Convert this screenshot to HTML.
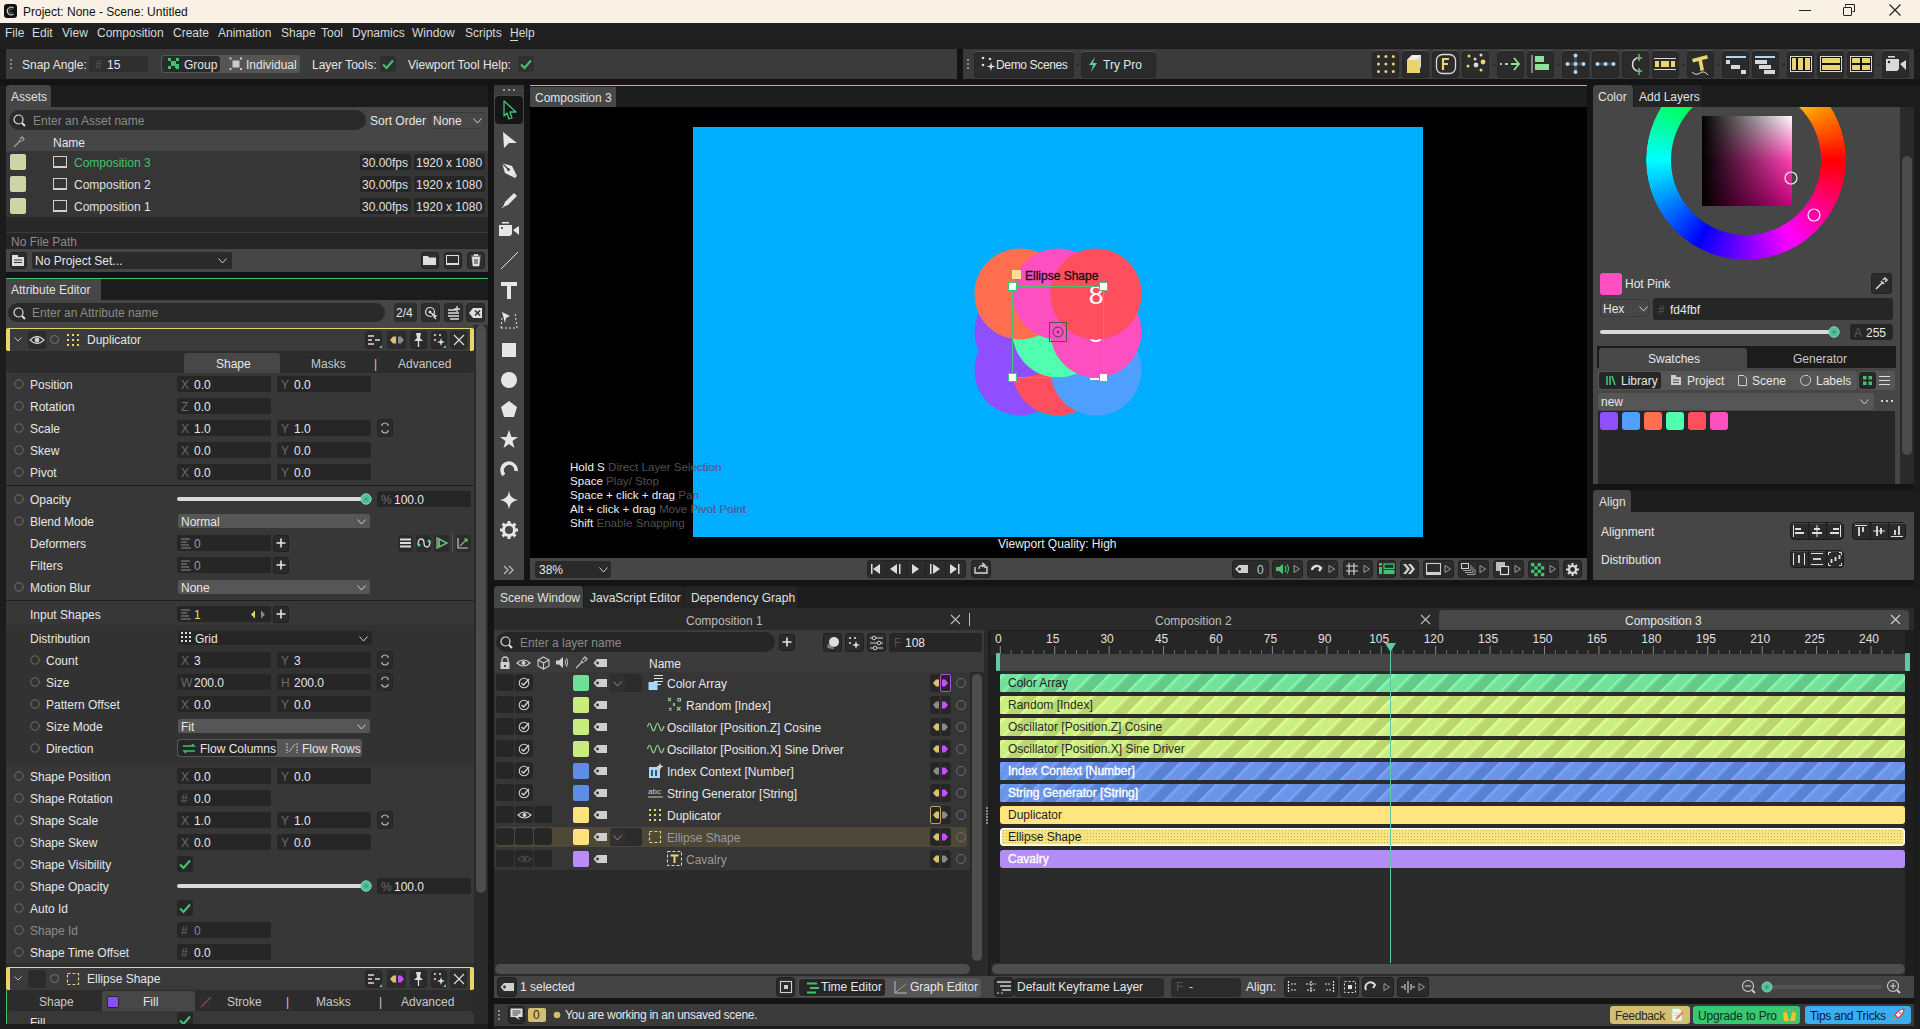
<!DOCTYPE html><html><head><meta charset="utf-8"><style>
*{margin:0;padding:0;box-sizing:border-box}
html,body{width:1920px;height:1029px;overflow:hidden;background:#1c1c1c;font-family:"Liberation Sans",sans-serif}
.a{position:absolute}
.t{position:absolute;white-space:nowrap}
svg{position:absolute;overflow:visible}
</style></head><body><div class="a" style="left:0px;top:0px;width:1920px;height:23px;background:#f9f1e4;"></div><div class="a" style="left:4px;top:4px;width:13px;height:14px;background:#111;border-radius:3px;"></div><svg style="left:5px;top:5px" width="11" height="12"><path d="M8.5 3A3.8 3.8 0 1 0 8.5 9" fill="none" stroke="#ddd" stroke-width="1.1"/><path d="M7.5 4.5A2 2 0 1 0 7.5 7.5" fill="none" stroke="#888" stroke-width="0.8"/></svg><div class="t" style="left:23px;top:4px;font-size:12px;line-height:17px;color:#111;">Project: None - Scene: Untitled</div><div class="a" style="left:1799px;top:10px;width:12px;height:1px;background:#222;"></div><div class="a" style="left:1843px;top:7px;width:9px;height:9px;border:1px solid #222;border-radius:1px"></div><svg style="left:1845px;top:4px" width="10" height="10"><path d="M0.5 2.5V0.5H9.5V7.5H7.5" fill="none" stroke="#222" stroke-width="1"/></svg><svg style="left:1889px;top:4px" width="12" height="12"><path d="M0.5 0.5L11.5 11.5M11.5 0.5L0.5 11.5" stroke="#222" stroke-width="1.2"/></svg><div class="a" style="left:0px;top:23px;width:1920px;height:26px;background:#202020;"></div><div class="a" style="left:0px;top:41px;width:1920px;height:8px;background:#1e1e1e;"></div><div class="t" style="left:5px;top:25px;font-size:12px;line-height:17px;color:#d8d8d8;">File</div><div class="t" style="left:32px;top:25px;font-size:12px;line-height:17px;color:#d8d8d8;">Edit</div><div class="t" style="left:62px;top:25px;font-size:12px;line-height:17px;color:#d8d8d8;">View</div><div class="t" style="left:97px;top:25px;font-size:12px;line-height:17px;color:#d8d8d8;">Composition</div><div class="t" style="left:173px;top:25px;font-size:12px;line-height:17px;color:#d8d8d8;">Create</div><div class="t" style="left:218px;top:25px;font-size:12px;line-height:17px;color:#d8d8d8;">Animation</div><div class="t" style="left:281px;top:25px;font-size:12px;line-height:17px;color:#d8d8d8;">Shape</div><div class="t" style="left:321px;top:25px;font-size:12px;line-height:17px;color:#d8d8d8;">Tool</div><div class="t" style="left:352px;top:25px;font-size:12px;line-height:17px;color:#d8d8d8;">Dynamics</div><div class="t" style="left:412px;top:25px;font-size:12px;line-height:17px;color:#d8d8d8;">Window</div><div class="t" style="left:465px;top:25px;font-size:12px;line-height:17px;color:#d8d8d8;">Scripts</div><div class="t" style="left:510px;top:25px;font-size:12px;line-height:17px;color:#d8d8d8;">Help</div><div class="a" style="left:510px;top:40px;width:8px;height:1px;background:#d8d8d8;"></div><div class="a" style="left:0px;top:79px;width:1920px;height:6px;background:#141414;"></div><div class="a" style="left:6px;top:49px;width:951px;height:30px;background:#3b3b3b;"></div><div class="a" style="left:963px;top:49px;width:951px;height:30px;background:#3b3b3b;"></div><div class="a" style="left:957px;top:49px;width:6px;height:30px;background:#141414;"></div><div class="a" style="left:6px;top:85px;width:45px;height:22px;background:#464646;border-radius:4px 4px 0 0;"></div><div class="t" style="left:11px;top:89px;font-size:12px;line-height:17px;color:#e0e0e0;">Assets</div><div class="a" style="left:6px;top:107px;width:482px;height:125px;background:#464646;"></div><div class="a" style="left:9px;top:110px;width:357px;height:20px;background:#2a2a2a;border-radius:10px;"></div><div class="a" style="left:6px;top:151px;width:482px;height:66px;background:#363636;"></div><div class="a" style="left:6px;top:217px;width:482px;height:15px;background:#282828;"></div><div class="a" style="left:6px;top:232px;width:482px;height:40px;background:#464646;"></div><div class="a" style="left:6px;top:272px;width:482px;height:6px;background:#141414;"></div><div class="a" style="left:6px;top:278px;width:482px;height:1px;background:#3ec46d;"></div><div class="a" style="left:6px;top:279px;width:95px;height:21px;background:#464646;"></div><div class="t" style="left:11px;top:282px;font-size:12px;line-height:17px;color:#e0e0e0;">Attribute Editor</div><div class="a" style="left:6px;top:300px;width:482px;height:704px;background:#464646;"></div><div class="a" style="left:494px;top:85px;width:30px;height:495px;background:#464646;"></div><div class="a" style="left:494px;top:85px;width:30px;height:10px;background:#3d3d3d;"></div><div class="a" style="left:530px;top:85px;width:1057px;height:495px;background:#1c1c1c;"></div><div class="a" style="left:530px;top:85px;width:1057px;height:1px;background:#c9b56a;"></div><div class="a" style="left:530px;top:87px;width:86px;height:20px;background:#474747;"></div><div class="t" style="left:535px;top:90px;font-size:12px;line-height:17px;color:#e0e0e0;">Composition 3</div><div class="a" style="left:530px;top:107px;width:1057px;height:451px;background:#000;"></div><div class="a" style="left:693px;top:127px;width:730px;height:410px;background:#00adff;"></div><div class="a" style="left:530px;top:558px;width:1057px;height:22px;background:#464646;"></div><div class="a" style="left:1593px;top:85px;width:40px;height:22px;background:#464646;border-radius:4px 4px 0 0;"></div><div class="t" style="left:1598px;top:89px;font-size:12px;line-height:17px;color:#e0e0e0;">Color</div><div class="a" style="left:1634px;top:85px;width:68px;height:22px;background:#252525;border-radius:4px 4px 0 0;"></div><div class="t" style="left:1639px;top:89px;font-size:12px;line-height:17px;color:#e0e0e0;">Add Layers</div><div class="a" style="left:1593px;top:107px;width:307px;height:377px;background:#464646;"></div><div class="a" style="left:1900px;top:107px;width:14px;height:378px;background:#2a2a2a;"></div><div class="a" style="left:1593px;top:490px;width:38px;height:22px;background:#464646;border-radius:4px 4px 0 0;"></div><div class="t" style="left:1599px;top:494px;font-size:12px;line-height:17px;color:#e0e0e0;">Align</div><div class="a" style="left:1593px;top:512px;width:321px;height:68px;background:#464646;"></div><div class="a" style="left:494px;top:586px;width:89px;height:22px;background:#464646;border-radius:4px 4px 0 0;"></div><div class="t" style="left:500px;top:590px;font-size:12px;line-height:17px;color:#e0e0e0;">Scene Window</div><div class="a" style="left:584px;top:586px;width:100px;height:22px;background:#252525;border-radius:4px 4px 0 0;"></div><div class="a" style="left:685px;top:586px;width:112px;height:22px;background:#252525;border-radius:4px 4px 0 0;"></div><div class="t" style="left:590px;top:590px;font-size:12px;line-height:17px;color:#e0e0e0;">JavaScript Editor</div><div class="t" style="left:691px;top:590px;font-size:12px;line-height:17px;color:#e0e0e0;">Dependency Graph</div><div class="a" style="left:494px;top:608px;width:1420px;height:390px;background:#2a2a2a;"></div><div class="a" style="left:494px;top:976px;width:1420px;height:22px;background:#464646;"></div><div class="a" style="left:494px;top:1004px;width:1420px;height:22px;background:#3a3a3a;"></div><div class="a" style="left:10px;top:59px;width:2px;height:2px;background:#8a8a8a;"></div><div class="a" style="left:10px;top:63px;width:2px;height:2px;background:#8a8a8a;"></div><div class="a" style="left:10px;top:67px;width:2px;height:2px;background:#8a8a8a;"></div><div class="t" style="left:22px;top:57px;font-size:12px;line-height:17px;color:#e6e6e6;">Snap Angle:</div><div class="a" style="left:89px;top:56px;width:59px;height:16px;background:#2f2f2f;border-radius:2px;"></div><div class="t" style="left:95px;top:57px;font-size:12px;line-height:17px;color:#5a5a5a;">#</div><div class="t" style="left:107px;top:57px;font-size:12px;line-height:17px;color:#e6e6e6;">15</div><div class="a" style="left:161px;top:55px;width:139px;height:18px;background:#555555;border-radius:3px;"></div><div class="a" style="left:162px;top:56px;width:58px;height:16px;background:#2a2a2a;border-radius:3px;"></div><svg style="left:167px;top:57px" width="14" height="14"><rect x="1" y="1" width="3" height="3" fill="#3ec46d"/><rect x="9" y="1" width="3" height="3" fill="#3ec46d"/><rect x="1" y="9" width="3" height="3" fill="#3ec46d"/><rect x="9" y="9" width="3" height="3" fill="#3ec46d"/><rect x="4" y="4" width="5" height="5" fill="#3ec46d"/><rect x="8" y="7" width="4" height="4" fill="#3ec46d"/></svg><div class="t" style="left:184px;top:57px;font-size:12px;line-height:17px;color:#e6e6e6;">Group</div><svg style="left:229px;top:57px" width="14" height="14"><rect x="0.5" y="0.5" width="2" height="2" fill="#ccc"/><rect x="11" y="0.5" width="2" height="2" fill="#ccc"/><rect x="0.5" y="11" width="2" height="2" fill="#ccc"/><rect x="11" y="11" width="2" height="2" fill="#ccc"/><rect x="3.5" y="3.5" width="7" height="7" fill="#ccc"/></svg><div class="t" style="left:246px;top:57px;font-size:12px;line-height:17px;color:#e6e6e6;">Individual</div><div class="t" style="left:312px;top:57px;font-size:12px;line-height:17px;color:#e6e6e6;">Layer Tools:</div><div class="a" style="left:380px;top:56px;width:16px;height:16px;background:#2f2f2f;border-radius:3px;"></div><svg style="left:382px;top:59px" width="12" height="10"><path d="M1 5.5L4.5 9L11 1.5" fill="none" stroke="#3ec46d" stroke-width="2.2"/></svg><div class="t" style="left:408px;top:57px;font-size:12px;line-height:17px;color:#e6e6e6;">Viewport Tool Help:</div><div class="a" style="left:518px;top:56px;width:16px;height:16px;background:#2f2f2f;border-radius:3px;"></div><svg style="left:520px;top:59px" width="12" height="10"><path d="M1 5.5L4.5 9L11 1.5" fill="none" stroke="#3ec46d" stroke-width="2.2"/></svg><div class="a" style="left:967px;top:59px;width:2px;height:2px;background:#8a8a8a;"></div><div class="a" style="left:967px;top:63px;width:2px;height:2px;background:#8a8a8a;"></div><div class="a" style="left:967px;top:67px;width:2px;height:2px;background:#8a8a8a;"></div><div class="a" style="left:974px;top:51px;width:100px;height:27px;background:#2b2b2b;border-radius:4px;border-top:1px solid #555;box-shadow:inset 0 0 0 1px #262626;"></div><svg style="left:980px;top:55px" width="16" height="18"><circle cx="3" cy="3" r="1.3" fill="#ddd"/><circle cx="10" cy="4" r="1.3" fill="#ddd"/><circle cx="3" cy="10" r="1.3" fill="#ddd"/><path d="M11 7L12 10.5L15.5 11.5L12 12.5L11 16L10 12.5L6.5 11.5L10 10.5Z" fill="#ddd"/></svg><div class="t" style="left:996px;top:57px;font-size:12px;line-height:17px;color:#e6e6e6;letter-spacing:-0.35px;">Demo Scenes</div><div class="a" style="left:1081px;top:51px;width:75px;height:27px;background:#2b2b2b;border-radius:4px;border-top:1px solid #555;box-shadow:inset 0 0 0 1px #262626;"></div><svg style="left:1088px;top:57px" width="10" height="15"><path d="M7 0L1 8H5L3 15L9 6H5Z" fill="#5ec9a6"/></svg><div class="t" style="left:1103px;top:57px;font-size:12px;line-height:17px;color:#e6e6e6;">Try Pro</div><div class="a" style="left:1076px;top:63px;width:3px;height:3px;background:#2a2a2a;border-radius:50%;"></div><div class="a" style="left:1493px;top:63px;width:3px;height:3px;background:#2a2a2a;border-radius:50%;"></div><div class="a" style="left:1557px;top:63px;width:3px;height:3px;background:#2a2a2a;border-radius:50%;"></div><div class="a" style="left:1682px;top:63px;width:3px;height:3px;background:#2a2a2a;border-radius:50%;"></div><div class="a" style="left:1717px;top:63px;width:3px;height:3px;background:#2a2a2a;border-radius:50%;"></div><div class="a" style="left:1782px;top:63px;width:3px;height:3px;background:#2a2a2a;border-radius:50%;"></div><div class="a" style="left:1877px;top:63px;width:3px;height:3px;background:#2a2a2a;border-radius:50%;"></div><div class="a" style="left:1372px;top:50px;width:27px;height:28px;background:#2b2b2b;border-radius:4px;border-top:1px solid #555;box-shadow:inset 0 0 0 1px #262626;"></div><div class="a" style="left:1402px;top:50px;width:27px;height:28px;background:#2b2b2b;border-radius:4px;border-top:1px solid #555;box-shadow:inset 0 0 0 1px #262626;"></div><div class="a" style="left:1432px;top:50px;width:27px;height:28px;background:#2b2b2b;border-radius:4px;border-top:1px solid #555;box-shadow:inset 0 0 0 1px #262626;"></div><div class="a" style="left:1462px;top:50px;width:27px;height:28px;background:#2b2b2b;border-radius:4px;border-top:1px solid #555;box-shadow:inset 0 0 0 1px #262626;"></div><div class="a" style="left:1497px;top:50px;width:27px;height:28px;background:#2b2b2b;border-radius:4px;border-top:1px solid #555;box-shadow:inset 0 0 0 1px #262626;"></div><div class="a" style="left:1527px;top:50px;width:27px;height:28px;background:#2b2b2b;border-radius:4px;border-top:1px solid #555;box-shadow:inset 0 0 0 1px #262626;"></div><div class="a" style="left:1562px;top:50px;width:27px;height:28px;background:#2b2b2b;border-radius:4px;border-top:1px solid #555;box-shadow:inset 0 0 0 1px #262626;"></div><div class="a" style="left:1592px;top:50px;width:27px;height:28px;background:#2b2b2b;border-radius:4px;border-top:1px solid #555;box-shadow:inset 0 0 0 1px #262626;"></div><div class="a" style="left:1622px;top:50px;width:27px;height:28px;background:#2b2b2b;border-radius:4px;border-top:1px solid #555;box-shadow:inset 0 0 0 1px #262626;"></div><div class="a" style="left:1652px;top:50px;width:27px;height:28px;background:#2b2b2b;border-radius:4px;border-top:1px solid #555;box-shadow:inset 0 0 0 1px #262626;"></div><div class="a" style="left:1687px;top:50px;width:27px;height:28px;background:#2b2b2b;border-radius:4px;border-top:1px solid #555;box-shadow:inset 0 0 0 1px #262626;"></div><div class="a" style="left:1722px;top:50px;width:27px;height:28px;background:#2b2b2b;border-radius:4px;border-top:1px solid #555;box-shadow:inset 0 0 0 1px #262626;"></div><div class="a" style="left:1752px;top:50px;width:27px;height:28px;background:#2b2b2b;border-radius:4px;border-top:1px solid #555;box-shadow:inset 0 0 0 1px #262626;"></div><div class="a" style="left:1787px;top:50px;width:27px;height:28px;background:#2b2b2b;border-radius:4px;border-top:1px solid #555;box-shadow:inset 0 0 0 1px #262626;"></div><div class="a" style="left:1817px;top:50px;width:27px;height:28px;background:#2b2b2b;border-radius:4px;border-top:1px solid #555;box-shadow:inset 0 0 0 1px #262626;"></div><div class="a" style="left:1847px;top:50px;width:27px;height:28px;background:#2b2b2b;border-radius:4px;border-top:1px solid #555;box-shadow:inset 0 0 0 1px #262626;"></div><div class="a" style="left:1882px;top:50px;width:27px;height:28px;background:#2b2b2b;border-radius:4px;border-top:1px solid #555;box-shadow:inset 0 0 0 1px #262626;"></div><svg style="left:1372px;top:50px" width="27" height="28"><circle cx="6.5" cy="6.5" r="1.5" fill="#e8d56e"/><circle cx="6.5" cy="14.0" r="1.5" fill="#e8d56e"/><circle cx="6.5" cy="21.5" r="1.5" fill="#e8d56e"/><circle cx="13.900000000000091" cy="6.5" r="1.5" fill="#e8d56e"/><circle cx="13.900000000000091" cy="14.0" r="1.5" fill="#e8d56e"/><circle cx="13.900000000000091" cy="21.5" r="1.5" fill="#e8d56e"/><circle cx="21.299999999999955" cy="6.5" r="1.5" fill="#e8d56e"/><circle cx="21.299999999999955" cy="14.0" r="1.5" fill="#e8d56e"/><circle cx="21.299999999999955" cy="21.5" r="1.5" fill="#e8d56e"/></svg><svg style="left:1402px;top:50px" width="27" height="28"><path d="M5 10L10 5H19V17L14 23Z" fill="#d8d8d8"/><path d="M5 10L10 5H19L14 10Z" fill="#eee"/><rect x="5" y="10" width="13" height="13" fill="#e8d56e"/></svg><svg style="left:1432px;top:50px" width="27" height="28"><rect x="4.5" y="4.5" width="19" height="19" rx="6" fill="none" stroke="#d8d8d8" stroke-width="1.3"/><path d="M11 8V20M11 9H17M11 14H16" stroke="#e8d56e" stroke-width="2.2" fill="none"/></svg><svg style="left:1462px;top:50px" width="27" height="28"><circle cx="7" cy="6" r="1.5" fill="#e8d56e"/><circle cx="13" cy="9" r="1.5" fill="#d8d8d8"/><circle cx="19" cy="5" r="1.5" fill="#d8d8d8"/><circle cx="21" cy="12" r="2.4" fill="#e8d56e"/><circle cx="14" cy="15" r="2.4" fill="#d8d8d8"/><circle cx="6" cy="16" r="1.5" fill="#e8d56e"/><circle cx="19" cy="20" r="1.5" fill="#e8d56e"/></svg><svg style="left:1497px;top:50px" width="27" height="28"><path d="M3 14H5M8 14H11M14 14H22M17 8L22 14L17 20" stroke="#8fe09c" stroke-width="1.8" fill="none"/></svg><svg style="left:1527px;top:50px" width="27" height="28"><path d="M5 5V23" stroke="#d8d8d8" stroke-width="1"/><rect x="8" y="6" width="9" height="6" fill="#8fe09c"/><rect x="8" y="14" width="14" height="6" fill="#8fe09c"/></svg><svg style="left:1562px;top:50px" width="27" height="28"><path d="M5 14H22M13.5 5V23" stroke="#4a4a4a" stroke-width="3"/><circle cx="13.5" cy="5.5" r="2" fill="#a6d8ff"/><circle cx="13.5" cy="14" r="2" fill="#a6d8ff"/><circle cx="13.5" cy="22" r="2" fill="#a6d8ff"/><circle cx="5.5" cy="14" r="2" fill="#a6d8ff"/><circle cx="21.5" cy="14" r="2" fill="#a6d8ff"/></svg><svg style="left:1592px;top:50px" width="27" height="28"><path d="M5 14H22" stroke="#4a4a4a" stroke-width="3"/><circle cx="5.5" cy="14" r="2" fill="#a6d8ff"/><circle cx="13.5" cy="14" r="2" fill="#a6d8ff"/><circle cx="21.5" cy="14" r="2" fill="#a6d8ff"/></svg><svg style="left:1622px;top:50px" width="27" height="28"><path d="M15 8A7 7 0 0 0 15 21" stroke="#d8d8d8" stroke-width="1.6" fill="none"/><path d="M17 4V11M14 8H20M17 18V25M14 21H20" stroke="#7fbf7f" stroke-width="1.4"/></svg><svg style="left:1652px;top:50px" width="27" height="28"><path d="M2 8.5H24M2 19.5H24" stroke="#d8d8d8" stroke-width="1"/><rect x="3" y="11" width="4" height="6" fill="#e8d56e"/><rect x="9" y="11" width="8" height="6" fill="#e8d56e"/><rect x="19" y="11" width="4" height="6" fill="#e8d56e"/></svg><svg style="left:1687px;top:50px" width="27" height="28"><path d="M5 9L20 5L21 8.5L15 10L17 20L13.5 21L11.5 11L6 12.5Z" fill="#e8d56e"/><path d="M5 22Q9 26 13 23T21 25" stroke="#d8d8d8" stroke-width="1" fill="none"/></svg><svg style="left:1722px;top:50px" width="27" height="28"><rect x="4" y="6" width="20" height="2" fill="#a6d8ff"/><rect x="4" y="10" width="4" height="4" fill="#d8d8d8"/><rect x="9" y="15" width="9" height="4" fill="#d8d8d8"/><rect x="19" y="20" width="5" height="4" fill="#d8d8d8"/></svg><svg style="left:1752px;top:50px" width="27" height="28"><rect x="3" y="6" width="20" height="2" fill="#a6d8ff"/><rect x="3" y="10" width="12" height="4" fill="#d8d8d8"/><rect x="7" y="15" width="12" height="4" fill="#d8d8d8"/><rect x="12" y="20" width="11" height="4" fill="#d8d8d8"/></svg><svg style="left:1787px;top:50px" width="27" height="28"><rect x="3.5" y="6.5" width="21" height="15" fill="#111" stroke="#d8d8d8" stroke-width="1"/><rect x="5" y="8" width="4" height="12" fill="#e8d56e"/><rect x="11" y="8" width="5" height="12" fill="#e8d56e"/><rect x="18" y="8" width="5" height="12" fill="#e8d56e"/></svg><svg style="left:1817px;top:50px" width="27" height="28"><rect x="3.5" y="6.5" width="21" height="15" fill="#111" stroke="#d8d8d8" stroke-width="1"/><rect x="5" y="8" width="18" height="5" fill="#e8d56e"/><rect x="5" y="15" width="18" height="5" fill="#e8d56e"/></svg><svg style="left:1847px;top:50px" width="27" height="28"><rect x="3.5" y="6.5" width="21" height="15" fill="#111" stroke="#d8d8d8" stroke-width="1"/><rect x="5" y="8" width="8" height="5" fill="#e8d56e"/><rect x="15" y="8" width="8" height="5" fill="#e8d56e"/><rect x="5" y="15" width="8" height="5" fill="#e8d56e"/><rect x="15" y="15" width="8" height="5" fill="#e8d56e"/></svg><svg style="left:1882px;top:50px" width="27" height="28"><rect x="6" y="6" width="7" height="1.5" fill="#d8d8d8"/><path d="M4 9H17V19L15 21H4Z" fill="#d8d8d8"/><circle cx="7" cy="12" r="1.2" fill="#222"/><path d="M18 14L24 10V20Z" fill="#d8d8d8"/></svg><svg style="left:13px;top:114px" width="14" height="14"><circle cx="5.5" cy="5.5" r="4.5" fill="none" stroke="#e0e0e0" stroke-width="1.2"/><path d="M9 9L12 12" stroke="#e0e0e0" stroke-width="2"/></svg><div class="t" style="left:33px;top:113px;font-size:12px;line-height:17px;color:#8a8a8a;">Enter an Asset name</div><div class="t" style="left:370px;top:113px;font-size:12px;line-height:17px;color:#e6e6e6;">Sort Order</div><div class="a" style="left:430px;top:112px;width:55px;height:17px;background:#474747;border:1px solid #3a3a3a;border-radius:3px;"></div><div class="t" style="left:433px;top:113px;font-size:12px;line-height:17px;color:#e6e6e6;">None</div><svg style="left:473px;top:118px" width="10" height="6"><path d="M0.5 0.5L4.5 5L8.5 0.5" fill="none" stroke="#cfcfcf" stroke-width="1"/></svg><svg style="left:13px;top:136px" width="12" height="12"><path d="M1 11L7 5M6 4L8 6M7 3L9 1L11 3L9 5" stroke="#9a9a9a" stroke-width="1.4" fill="none"/></svg><div class="t" style="left:53px;top:135px;font-size:12px;line-height:17px;color:#e6e6e6;">Name</div><div class="a" style="left:10px;top:154px;width:16px;height:16px;background:#cdd5a6;border-radius:2px;"></div><svg style="left:53px;top:156px" width="15" height="13"><rect x="0.5" y="0.5" width="13" height="10" fill="none" stroke="#d0d0d0" stroke-width="1"/><rect x="0" y="10" width="14" height="2" fill="#d0d0d0"/></svg><div class="t" style="left:74px;top:155px;font-size:12px;line-height:17px;color:#3ec46d;">Composition 3</div><div class="a" style="left:360px;top:154px;width:51px;height:16px;background:#262626;border-radius:2px;"></div><div class="t" style="left:362px;top:155px;font-size:12px;line-height:17px;color:#e0e0e0;">30.00fps</div><div class="a" style="left:414px;top:154px;width:71px;height:16px;background:#262626;border-radius:2px;"></div><div class="t" style="left:416px;top:155px;font-size:12px;line-height:17px;color:#e0e0e0;">1920 x 1080</div><div class="a" style="left:10px;top:176px;width:16px;height:16px;background:#cdd5a6;border-radius:2px;"></div><svg style="left:53px;top:178px" width="15" height="13"><rect x="0.5" y="0.5" width="13" height="10" fill="none" stroke="#d0d0d0" stroke-width="1"/><rect x="0" y="10" width="14" height="2" fill="#d0d0d0"/></svg><div class="t" style="left:74px;top:177px;font-size:12px;line-height:17px;color:#e0e0e0;">Composition 2</div><div class="a" style="left:360px;top:176px;width:51px;height:16px;background:#262626;border-radius:2px;"></div><div class="t" style="left:362px;top:177px;font-size:12px;line-height:17px;color:#e0e0e0;">30.00fps</div><div class="a" style="left:414px;top:176px;width:71px;height:16px;background:#262626;border-radius:2px;"></div><div class="t" style="left:416px;top:177px;font-size:12px;line-height:17px;color:#e0e0e0;">1920 x 1080</div><div class="a" style="left:10px;top:198px;width:16px;height:16px;background:#cdd5a6;border-radius:2px;"></div><svg style="left:53px;top:200px" width="15" height="13"><rect x="0.5" y="0.5" width="13" height="10" fill="none" stroke="#d0d0d0" stroke-width="1"/><rect x="0" y="10" width="14" height="2" fill="#d0d0d0"/></svg><div class="t" style="left:74px;top:199px;font-size:12px;line-height:17px;color:#e0e0e0;">Composition 1</div><div class="a" style="left:360px;top:198px;width:51px;height:16px;background:#262626;border-radius:2px;"></div><div class="t" style="left:362px;top:199px;font-size:12px;line-height:17px;color:#e0e0e0;">30.00fps</div><div class="a" style="left:414px;top:198px;width:71px;height:16px;background:#262626;border-radius:2px;"></div><div class="t" style="left:416px;top:199px;font-size:12px;line-height:17px;color:#e0e0e0;">1920 x 1080</div><div class="a" style="left:6px;top:232px;width:482px;height:17px;background:#262626;"></div><div class="a" style="left:6px;top:232px;width:482px;height:1px;background:#3a3a3a;"></div><div class="t" style="left:11px;top:234px;font-size:12px;line-height:17px;color:#8c8c8c;">No File Path</div><div class="a" style="left:10px;top:252px;width:17px;height:17px;background:#2e2e2e;border-radius:3px;border:1px solid #222;"></div><svg style="left:12px;top:255px" width="13" height="11"><rect x="0" y="2" width="12" height="9" fill="#ddd"/><rect x="0" y="0" width="6" height="2" fill="#ddd"/><path d="M2 5H10M2 7.5H10" stroke="#333" stroke-width="1"/></svg><div class="a" style="left:32px;top:252px;width:200px;height:17px;background:#2a2a2a;border-radius:2px;"></div><div class="t" style="left:35px;top:253px;font-size:12px;line-height:17px;color:#e6e6e6;">No Project Set...</div><svg style="left:218px;top:258px" width="10" height="6"><path d="M0.5 0.5L4.5 5L8.5 0.5" fill="none" stroke="#cfcfcf" stroke-width="1"/></svg><div class="a" style="left:421px;top:252px;width:18px;height:17px;background:#2e2e2e;border-radius:3px;border:1px solid #222;"></div><div class="a" style="left:444px;top:252px;width:18px;height:17px;background:#2e2e2e;border-radius:3px;border:1px solid #222;"></div><div class="a" style="left:467px;top:252px;width:18px;height:17px;background:#2e2e2e;border-radius:3px;border:1px solid #222;"></div><svg style="left:423px;top:255px" width="14" height="11"><path d="M0 1H5L6 2.5H13V10H0Z" fill="#ddd"/></svg><svg style="left:446px;top:255px" width="14" height="11"><rect x="0.5" y="0.5" width="12" height="8" fill="none" stroke="#ddd" stroke-width="1"/><rect x="0" y="8" width="13" height="2" fill="#ddd"/></svg><svg style="left:470px;top:254px" width="12" height="13"><path d="M1 2H11M4 2V0.5H8V2M2 3H10L9 12H3Z" fill="#ddd" stroke="#ddd" stroke-width="0.6"/><path d="M5 5V10M7 5V10" stroke="#333"/></svg><div class="a" style="left:8px;top:303px;width:377px;height:19px;background:#2a2a2a;border-radius:10px;"></div><svg style="left:13px;top:307px" width="14" height="14"><circle cx="5.5" cy="5.5" r="4.5" fill="none" stroke="#e0e0e0" stroke-width="1.2"/><path d="M9 9L12 12" stroke="#e0e0e0" stroke-width="2"/></svg><div class="t" style="left:32px;top:305px;font-size:12px;line-height:17px;color:#8a8a8a;">Enter an Attribute name</div><div class="a" style="left:394px;top:303px;width:23px;height:19px;background:#2e2e2e;border-radius:3px;"></div><div class="t" style="left:396px;top:305px;font-size:12px;line-height:17px;color:#e6e6e6;">2/4</div><div class="a" style="left:421px;top:303px;width:19px;height:19px;background:#2e2e2e;border-radius:3px;border:1px solid #262626;"></div><div class="a" style="left:444px;top:303px;width:19px;height:19px;background:#2e2e2e;border-radius:3px;border:1px solid #262626;"></div><div class="a" style="left:466px;top:303px;width:19px;height:19px;background:#2e2e2e;border-radius:3px;border:1px solid #262626;"></div><svg style="left:424px;top:306px" width="14" height="14"><circle cx="6" cy="6" r="4.5" fill="none" stroke="#ddd" stroke-width="1.2"/><circle cx="6" cy="6" r="1.5" fill="#ddd"/><path d="M7 7L12 10L10 11L12 13" stroke="#ddd" stroke-width="1.3" fill="#ddd"/></svg><svg style="left:447px;top:306px" width="14" height="14"><path d="M1 4H9M1 7H12M1 10H12M3 13H12" stroke="#ddd" stroke-width="1.6"/><path d="M10 0V6M7 3H13" stroke="#ddd" stroke-width="1.3"/></svg><svg style="left:469px;top:307px" width="14" height="12"><path d="M4 1H13V11H4L0 6Z" fill="#ddd"/><path d="M6 3.5L11 8.5M11 3.5L6 8.5" stroke="#333" stroke-width="1.6"/></svg><div class="a" style="left:474px;top:325px;width:14px;height:699px;background:#2a2a2a;"></div><div class="a" style="left:476px;top:325px;width:10px;height:568px;background:#4d4d4d;border-radius:5px;"></div><div class="a" style="left:6px;top:328px;width:468px;height:23px;background:#e9d66b;border-radius:2px;"></div><div class="a" style="left:10px;top:329px;width:460px;height:22px;background:#3a3a3a;"></div><svg style="left:14px;top:337px" width="9" height="5"><path d="M0.5 0.5L4.0 4L7.5 0.5" fill="none" stroke="#bdbdbd" stroke-width="1"/></svg><div class="a" style="left:28px;top:331px;width:18px;height:18px;background:#2b2b2b;border-radius:3px;"></div><svg style="left:29px;top:334px" width="16" height="12"><path d="M1 6Q8 -1 15 6Q8 13 1 6Z" fill="none" stroke="#cfcfcf" stroke-width="1.2"/><circle cx="8" cy="6" r="2.4" fill="#cfcfcf"/></svg><svg style="left:50px;top:335px" width="10" height="10"><circle cx="4.5" cy="4.5" r="4" fill="none" stroke="#777" stroke-width="1"/></svg><svg style="left:66px;top:333px;position:absolute" width="14" height="14"><rect x="1" y="1" width="2" height="2" fill="#e8d56e"/><rect x="1" y="6" width="2" height="2" fill="#e8d56e"/><rect x="1" y="11" width="2" height="2" fill="#e8d56e"/><rect x="6" y="1" width="2" height="2" fill="#e8d56e"/><rect x="6" y="6" width="2" height="2" fill="#e8d56e"/><rect x="6" y="11" width="2" height="2" fill="#e8d56e"/><rect x="11" y="1" width="2" height="2" fill="#e8d56e"/><rect x="11" y="6" width="2" height="2" fill="#e8d56e"/><rect x="11" y="11" width="2" height="2" fill="#e8d56e"/></svg><div class="t" style="left:87px;top:332px;font-size:12px;line-height:17px;color:#e6e6e6;">Duplicator</div><div class="a" style="left:365px;top:331px;width:17px;height:18px;background:#2b2b2b;border-radius:3px;border:1px solid #262626;"></div><div class="a" style="left:410px;top:331px;width:17px;height:18px;background:#2b2b2b;border-radius:3px;border:1px solid #262626;"></div><div class="a" style="left:431px;top:331px;width:16px;height:18px;background:#2b2b2b;border-radius:3px;border:1px solid #262626;"></div><div class="a" style="left:450px;top:331px;width:17px;height:18px;background:#2b2b2b;border-radius:3px;border:1px solid #262626;"></div><div class="a" style="left:387px;top:331px;width:19px;height:18px;background:#2b2b2b;border-radius:3px;"></div><svg style="left:368px;top:335px" width="13" height="11"><path d="M0 1H6M0 5H4M7 5H12M0 9H6" stroke="#ddd" stroke-width="1.5"/></svg><div class="a" style="left:396px;top:331px;width:1px;height:18px;background:#3a3a3a;"></div><svg style="left:389px;top:335px" width="16" height="10"><path d="M7 1.5H4L1 5L4 8.5H7Z" fill="#d8c070"/><path d="M9 1.5H12L15 5L12 8.5H9Z" fill="#8a8a8a"/></svg><svg style="left:379px;top:345px" width="3" height="3"><path d="M3 0V3H0Z" fill="#5ec9a6"/></svg><svg style="left:443px;top:345px" width="3" height="3"><path d="M3 0V3H0Z" fill="#5ec9a6"/></svg><svg style="left:413px;top:333px" width="11" height="14"><path d="M3 0H8L7 5L10 8H1L4 5Z" fill="#ddd"/><path d="M5.5 8V14" stroke="#ddd" stroke-width="1.3"/></svg><svg style="left:433px;top:333px" width="13" height="14"><circle cx="2" cy="2" r="1.1" fill="#ddd"/><circle cx="7" cy="2" r="1.1" fill="#ddd"/><circle cx="2" cy="7" r="1.1" fill="#ddd"/><path d="M8 5L9 8L12 9L9 10L8 13L7 10L4 9L7 8Z" fill="#ddd"/></svg><svg style="left:453px;top:334px" width="12" height="12"><path d="M1 1L11 11M11 1L1 11" stroke="#ddd" stroke-width="1.2"/></svg><div class="a" style="left:6px;top:351px;width:468px;height:22px;background:#2c2c2c;"></div><div class="a" style="left:184px;top:353px;width:96px;height:20px;background:#474747;border-radius:3px 3px 0 0;"></div><div class="t" style="left:216px;top:356px;font-size:12px;line-height:17px;color:#e6e6e6;">Shape</div><div class="t" style="left:311px;top:356px;font-size:12px;line-height:17px;color:#c8c8c8;">Masks</div><div class="t" style="left:374px;top:356px;font-size:12px;line-height:17px;color:#c8c8c8;">|</div><div class="t" style="left:398px;top:356px;font-size:12px;line-height:17px;color:#c8c8c8;">Advanced</div><div class="a" style="left:6px;top:373px;width:468px;height:590px;background:#373737;border-radius:4px 4px 0 0;"></div><div class="a" style="left:6px;top:625px;width:468px;height:140px;background:#323232;"></div><svg style="left:14px;top:379px" width="10" height="10"><circle cx="5" cy="5" r="4.2" fill="none" stroke="#707070" stroke-width="1"/></svg><div class="t" style="left:30px;top:377px;font-size:12px;line-height:17px;color:#e6e6e6;">Position</div><div class="a" style="left:177px;top:376px;width:94px;height:16px;background:#262626;border-radius:2px;"></div><div class="t" style="left:181px;top:377px;font-size:12px;line-height:17px;color:#6a6a6a;">X</div><div class="t" style="left:194px;top:377px;font-size:12px;line-height:17px;color:#e6e6e6;">0.0</div><div class="a" style="left:277px;top:376px;width:94px;height:16px;background:#262626;border-radius:2px;"></div><div class="t" style="left:281px;top:377px;font-size:12px;line-height:17px;color:#6a6a6a;">Y</div><div class="t" style="left:294px;top:377px;font-size:12px;line-height:17px;color:#e6e6e6;">0.0</div><svg style="left:14px;top:401px" width="10" height="10"><circle cx="5" cy="5" r="4.2" fill="none" stroke="#707070" stroke-width="1"/></svg><div class="t" style="left:30px;top:399px;font-size:12px;line-height:17px;color:#e6e6e6;">Rotation</div><div class="a" style="left:177px;top:398px;width:94px;height:16px;background:#262626;border-radius:2px;"></div><div class="t" style="left:181px;top:399px;font-size:12px;line-height:17px;color:#6a6a6a;">Z</div><div class="t" style="left:194px;top:399px;font-size:12px;line-height:17px;color:#e6e6e6;">0.0</div><svg style="left:14px;top:423px" width="10" height="10"><circle cx="5" cy="5" r="4.2" fill="none" stroke="#707070" stroke-width="1"/></svg><div class="t" style="left:30px;top:421px;font-size:12px;line-height:17px;color:#e6e6e6;">Scale</div><div class="a" style="left:177px;top:420px;width:94px;height:16px;background:#262626;border-radius:2px;"></div><div class="t" style="left:181px;top:421px;font-size:12px;line-height:17px;color:#6a6a6a;">X</div><div class="t" style="left:194px;top:421px;font-size:12px;line-height:17px;color:#e6e6e6;">1.0</div><div class="a" style="left:277px;top:420px;width:94px;height:16px;background:#262626;border-radius:2px;"></div><div class="t" style="left:281px;top:421px;font-size:12px;line-height:17px;color:#6a6a6a;">Y</div><div class="t" style="left:294px;top:421px;font-size:12px;line-height:17px;color:#e6e6e6;">1.0</div><div class="a" style="left:377px;top:419px;width:16px;height:18px;background:#2b2b2b;border-radius:3px;border:1px solid #232323;"></div><svg style="left:381px;top:422px" width="8" height="12"><path d="M1 4V2.5Q4 -0.5 7 2.5V4M1 8V9.5Q4 12.5 7 9.5V8" fill="none" stroke="#bbb" stroke-width="1.1"/></svg><svg style="left:14px;top:445px" width="10" height="10"><circle cx="5" cy="5" r="4.2" fill="none" stroke="#707070" stroke-width="1"/></svg><div class="t" style="left:30px;top:443px;font-size:12px;line-height:17px;color:#e6e6e6;">Skew</div><div class="a" style="left:177px;top:442px;width:94px;height:16px;background:#262626;border-radius:2px;"></div><div class="t" style="left:181px;top:443px;font-size:12px;line-height:17px;color:#6a6a6a;">X</div><div class="t" style="left:194px;top:443px;font-size:12px;line-height:17px;color:#e6e6e6;">0.0</div><div class="a" style="left:277px;top:442px;width:94px;height:16px;background:#262626;border-radius:2px;"></div><div class="t" style="left:281px;top:443px;font-size:12px;line-height:17px;color:#6a6a6a;">Y</div><div class="t" style="left:294px;top:443px;font-size:12px;line-height:17px;color:#e6e6e6;">0.0</div><svg style="left:14px;top:467px" width="10" height="10"><circle cx="5" cy="5" r="4.2" fill="none" stroke="#707070" stroke-width="1"/></svg><div class="t" style="left:30px;top:465px;font-size:12px;line-height:17px;color:#e6e6e6;">Pivot</div><div class="a" style="left:177px;top:464px;width:94px;height:16px;background:#262626;border-radius:2px;"></div><div class="t" style="left:181px;top:465px;font-size:12px;line-height:17px;color:#6a6a6a;">X</div><div class="t" style="left:194px;top:465px;font-size:12px;line-height:17px;color:#e6e6e6;">0.0</div><div class="a" style="left:277px;top:464px;width:94px;height:16px;background:#262626;border-radius:2px;"></div><div class="t" style="left:281px;top:465px;font-size:12px;line-height:17px;color:#6a6a6a;">Y</div><div class="t" style="left:294px;top:465px;font-size:12px;line-height:17px;color:#e6e6e6;">0.0</div><div class="a" style="left:6px;top:485px;width:468px;height:1px;background:#1e1e1e;"></div><svg style="left:14px;top:494px" width="10" height="10"><circle cx="5" cy="5" r="4.2" fill="none" stroke="#707070" stroke-width="1"/></svg><div class="t" style="left:30px;top:492px;font-size:12px;line-height:17px;color:#e6e6e6;">Opacity</div><div class="a" style="left:177px;top:497px;width:190px;height:4px;background:#dadada;border-radius:2px;"></div><svg style="left:360px;top:493px" width="12" height="12"><circle cx="6" cy="6" r="5.2" fill="#4fbf97" stroke="#86d9bb" stroke-width="1"/><circle cx="6" cy="6" r="1.5" fill="#3a9c79"/></svg><div class="a" style="left:377px;top:491px;width:94px;height:16px;background:#262626;border-radius:2px;"></div><div class="t" style="left:381px;top:492px;font-size:12px;line-height:17px;color:#6a6a6a;">%</div><div class="t" style="left:394px;top:492px;font-size:12px;line-height:17px;color:#e6e6e6;">100.0</div><svg style="left:14px;top:516px" width="10" height="10"><circle cx="5" cy="5" r="4.2" fill="none" stroke="#707070" stroke-width="1"/></svg><div class="t" style="left:30px;top:514px;font-size:12px;line-height:17px;color:#e6e6e6;">Blend Mode</div><div class="a" style="left:178px;top:514px;width:192px;height:14px;background:#565656;border-radius:2px;"></div><div class="t" style="left:181px;top:514px;font-size:12px;line-height:17px;color:#e6e6e6;">Normal</div><svg style="left:357px;top:519px" width="10" height="6"><path d="M0.5 0.5L4.5 5L8.5 0.5" fill="none" stroke="#cfcfcf" stroke-width="1"/></svg><div class="t" style="left:30px;top:536px;font-size:12px;line-height:17px;color:#e6e6e6;">Deformers</div><div class="a" style="left:177px;top:535px;width:94px;height:16px;background:#262626;border-radius:2px;"></div><svg style="left:180px;top:538px" width="12" height="11"><path d="M1 1H10M1 4H7M1 7H9M1 10H11" stroke="#8a8a8a" stroke-width="1"/></svg><div class="t" style="left:194px;top:536px;font-size:12px;line-height:17px;color:#9a9a9a;">0</div><div class="a" style="left:273px;top:535px;width:16px;height:17px;background:#2b2b2b;border-radius:3px;border:1px solid #1f1f1f;"></div><svg style="left:276px;top:538px" width="10" height="10"><path d="M5 0.5V9.5M0.5 5H9.5" stroke="#e6e6e6" stroke-width="1.6"/></svg><div class="a" style="left:398px;top:535px;width:15px;height:17px;background:#2b2b2b;border-radius:3px;"></div><div class="a" style="left:416px;top:535px;width:15px;height:17px;background:#2b2b2b;border-radius:3px;"></div><div class="a" style="left:434px;top:535px;width:15px;height:17px;background:#2b2b2b;border-radius:3px;"></div><div class="a" style="left:456px;top:535px;width:15px;height:17px;background:#2b2b2b;border-radius:3px;"></div><svg style="left:400px;top:538px" width="12" height="10"><path d="M0 1.5H11M0 5H11M0 8.5H11" stroke="#ddd" stroke-width="1.8"/></svg><svg style="left:417px;top:537px" width="14" height="12"><path d="M1 8Q1 2 4 2Q7 2 7 6Q7 10 10 10Q13 10 13 4" fill="none" stroke="#ddd" stroke-width="1.3"/><circle cx="2" cy="8" r="1.5" fill="#5ec9a6"/><circle cx="12" cy="4" r="1.5" fill="#5ec9a6"/></svg><svg style="left:436px;top:537px" width="12" height="12"><path d="M1 1L11 6L1 11Z" fill="none" stroke="#6fbf6f" stroke-width="1.4"/><path d="M3 3V9" stroke="#ddd" stroke-width="1.2"/></svg><div class="a" style="left:452px;top:533px;width:1px;height:20px;background:#555;"></div><svg style="left:457px;top:537px" width="12" height="12"><path d="M1 1V11H11" fill="none" stroke="#ccc" stroke-width="1.2"/><path d="M3 9L10 2M7 2H10V5" fill="none" stroke="#6fbf6f" stroke-width="1.2"/></svg><div class="t" style="left:30px;top:558px;font-size:12px;line-height:17px;color:#e6e6e6;">Filters</div><div class="a" style="left:177px;top:557px;width:94px;height:16px;background:#262626;border-radius:2px;"></div><svg style="left:180px;top:560px" width="12" height="11"><path d="M1 1H10M1 4H7M1 7H9M1 10H11" stroke="#8a8a8a" stroke-width="1"/></svg><div class="t" style="left:194px;top:558px;font-size:12px;line-height:17px;color:#9a9a9a;">0</div><div class="a" style="left:273px;top:557px;width:16px;height:17px;background:#2b2b2b;border-radius:3px;border:1px solid #1f1f1f;"></div><svg style="left:276px;top:560px" width="10" height="10"><path d="M5 0.5V9.5M0.5 5H9.5" stroke="#e6e6e6" stroke-width="1.6"/></svg><svg style="left:14px;top:582px" width="10" height="10"><circle cx="5" cy="5" r="4.2" fill="none" stroke="#707070" stroke-width="1"/></svg><div class="t" style="left:30px;top:580px;font-size:12px;line-height:17px;color:#e6e6e6;">Motion Blur</div><div class="a" style="left:178px;top:580px;width:192px;height:14px;background:#565656;border-radius:2px;"></div><div class="t" style="left:181px;top:580px;font-size:12px;line-height:17px;color:#e6e6e6;">None</div><svg style="left:357px;top:585px" width="10" height="6"><path d="M0.5 0.5L4.5 5L8.5 0.5" fill="none" stroke="#cfcfcf" stroke-width="1"/></svg><div class="a" style="left:6px;top:600px;width:468px;height:1px;background:#1e1e1e;"></div><div class="t" style="left:30px;top:607px;font-size:12px;line-height:17px;color:#e6e6e6;">Input Shapes</div><div class="a" style="left:177px;top:606px;width:94px;height:16px;background:#262626;border-radius:2px;"></div><svg style="left:180px;top:609px" width="12" height="11"><path d="M1 1H10M1 4H7M1 7H9M1 10H11" stroke="#8a8a8a" stroke-width="1"/></svg><div class="t" style="left:194px;top:607px;font-size:12px;line-height:17px;color:#e8d56e;">1</div><svg style="left:250px;top:610px" width="18" height="9"><path d="M5 0.5L1 4.5L5 8.5Z" fill="#e8d56e"/><path d="M11 0.5L15 4.5L11 8.5Z" fill="#8a8a8a"/></svg><div class="a" style="left:273px;top:606px;width:16px;height:17px;background:#2b2b2b;border-radius:3px;border:1px solid #1f1f1f;"></div><svg style="left:276px;top:609px" width="10" height="10"><path d="M5 0.5V9.5M0.5 5H9.5" stroke="#e6e6e6" stroke-width="1.6"/></svg><div class="t" style="left:30px;top:631px;font-size:12px;line-height:17px;color:#e6e6e6;">Distribution</div><div class="a" style="left:178px;top:631px;width:194px;height:14px;background:#262626;border-radius:2px;"></div><svg style="left:181px;top:632px;position:absolute" width="12" height="12"><rect x="0" y="0" width="2" height="2" fill="#ddd"/><rect x="0" y="4" width="2" height="2" fill="#ddd"/><rect x="0" y="8" width="2" height="2" fill="#ddd"/><rect x="4" y="0" width="2" height="2" fill="#ddd"/><rect x="4" y="4" width="2" height="2" fill="#ddd"/><rect x="4" y="8" width="2" height="2" fill="#ddd"/><rect x="8" y="0" width="2" height="2" fill="#ddd"/><rect x="8" y="4" width="2" height="2" fill="#ddd"/><rect x="8" y="8" width="2" height="2" fill="#ddd"/></svg><div class="t" style="left:195px;top:631px;font-size:12px;line-height:17px;color:#e6e6e6;">Grid</div><svg style="left:359px;top:636px" width="10" height="6"><path d="M0.5 0.5L4.5 5L8.5 0.5" fill="none" stroke="#cfcfcf" stroke-width="1"/></svg><svg style="left:30px;top:655px" width="10" height="10"><circle cx="5" cy="5" r="4.2" fill="none" stroke="#707070" stroke-width="1"/></svg><div class="t" style="left:46px;top:653px;font-size:12px;line-height:17px;color:#e6e6e6;">Count</div><div class="a" style="left:177px;top:652px;width:94px;height:16px;background:#262626;border-radius:2px;"></div><div class="t" style="left:181px;top:653px;font-size:12px;line-height:17px;color:#6a6a6a;">X</div><div class="t" style="left:194px;top:653px;font-size:12px;line-height:17px;color:#e6e6e6;">3</div><div class="a" style="left:277px;top:652px;width:94px;height:16px;background:#262626;border-radius:2px;"></div><div class="t" style="left:281px;top:653px;font-size:12px;line-height:17px;color:#6a6a6a;">Y</div><div class="t" style="left:294px;top:653px;font-size:12px;line-height:17px;color:#e6e6e6;">3</div><div class="a" style="left:377px;top:651px;width:16px;height:18px;background:#2b2b2b;border-radius:3px;border:1px solid #232323;"></div><svg style="left:381px;top:654px" width="8" height="12"><path d="M1 4V2.5Q4 -0.5 7 2.5V4M1 8V9.5Q4 12.5 7 9.5V8" fill="none" stroke="#bbb" stroke-width="1.1"/></svg><svg style="left:30px;top:677px" width="10" height="10"><circle cx="5" cy="5" r="4.2" fill="none" stroke="#707070" stroke-width="1"/></svg><div class="t" style="left:46px;top:675px;font-size:12px;line-height:17px;color:#e6e6e6;">Size</div><div class="a" style="left:177px;top:674px;width:94px;height:16px;background:#262626;border-radius:2px;"></div><div class="t" style="left:181px;top:675px;font-size:12px;line-height:17px;color:#6a6a6a;">W</div><div class="t" style="left:194px;top:675px;font-size:12px;line-height:17px;color:#e6e6e6;">200.0</div><div class="a" style="left:277px;top:674px;width:94px;height:16px;background:#262626;border-radius:2px;"></div><div class="t" style="left:281px;top:675px;font-size:12px;line-height:17px;color:#6a6a6a;">H</div><div class="t" style="left:294px;top:675px;font-size:12px;line-height:17px;color:#e6e6e6;">200.0</div><div class="a" style="left:377px;top:673px;width:16px;height:18px;background:#2b2b2b;border-radius:3px;border:1px solid #232323;"></div><svg style="left:381px;top:676px" width="8" height="12"><path d="M1 4V2.5Q4 -0.5 7 2.5V4M1 8V9.5Q4 12.5 7 9.5V8" fill="none" stroke="#bbb" stroke-width="1.1"/></svg><svg style="left:30px;top:699px" width="10" height="10"><circle cx="5" cy="5" r="4.2" fill="none" stroke="#707070" stroke-width="1"/></svg><div class="t" style="left:46px;top:697px;font-size:12px;line-height:17px;color:#e6e6e6;">Pattern Offset</div><div class="a" style="left:177px;top:696px;width:94px;height:16px;background:#262626;border-radius:2px;"></div><div class="t" style="left:181px;top:697px;font-size:12px;line-height:17px;color:#6a6a6a;">X</div><div class="t" style="left:194px;top:697px;font-size:12px;line-height:17px;color:#e6e6e6;">0.0</div><div class="a" style="left:277px;top:696px;width:94px;height:16px;background:#262626;border-radius:2px;"></div><div class="t" style="left:281px;top:697px;font-size:12px;line-height:17px;color:#6a6a6a;">Y</div><div class="t" style="left:294px;top:697px;font-size:12px;line-height:17px;color:#e6e6e6;">0.0</div><svg style="left:30px;top:721px" width="10" height="10"><circle cx="5" cy="5" r="4.2" fill="none" stroke="#707070" stroke-width="1"/></svg><div class="t" style="left:46px;top:719px;font-size:12px;line-height:17px;color:#e6e6e6;">Size Mode</div><div class="a" style="left:178px;top:719px;width:192px;height:14px;background:#565656;border-radius:2px;"></div><div class="t" style="left:181px;top:719px;font-size:12px;line-height:17px;color:#e6e6e6;">Fit</div><svg style="left:357px;top:724px" width="10" height="6"><path d="M0.5 0.5L4.5 5L8.5 0.5" fill="none" stroke="#cfcfcf" stroke-width="1"/></svg><svg style="left:30px;top:743px" width="10" height="10"><circle cx="5" cy="5" r="4.2" fill="none" stroke="#707070" stroke-width="1"/></svg><div class="t" style="left:46px;top:741px;font-size:12px;line-height:17px;color:#e6e6e6;">Direction</div><div class="a" style="left:177px;top:739px;width:185px;height:18px;background:#565656;border-radius:3px;"></div><div class="a" style="left:178px;top:740px;width:99px;height:16px;background:#262626;border-radius:3px;"></div><svg style="left:182px;top:743px" width="14" height="11"><path d="M1 3H12L10 1M13 8H2L4 10" fill="none" stroke="#3ec46d" stroke-width="1.5"/></svg><div class="t" style="left:200px;top:741px;font-size:12px;line-height:17px;color:#e6e6e6;">Flow Columns</div><svg style="left:286px;top:742px" width="12" height="12"><path d="M1 1V11M11 1V11M3 10L9 2" fill="none" stroke="#bbb" stroke-width="1.2" stroke-dasharray="2 1"/></svg><div class="t" style="left:302px;top:741px;font-size:12px;line-height:17px;color:#e6e6e6;">Flow Rows</div><svg style="left:14px;top:771px" width="10" height="10"><circle cx="5" cy="5" r="4.2" fill="none" stroke="#707070" stroke-width="1"/></svg><div class="t" style="left:30px;top:769px;font-size:12px;line-height:17px;color:#e6e6e6;">Shape Position</div><div class="a" style="left:177px;top:768px;width:94px;height:16px;background:#262626;border-radius:2px;"></div><div class="t" style="left:181px;top:769px;font-size:12px;line-height:17px;color:#6a6a6a;">X</div><div class="t" style="left:194px;top:769px;font-size:12px;line-height:17px;color:#e6e6e6;">0.0</div><div class="a" style="left:277px;top:768px;width:94px;height:16px;background:#262626;border-radius:2px;"></div><div class="t" style="left:281px;top:769px;font-size:12px;line-height:17px;color:#6a6a6a;">Y</div><div class="t" style="left:294px;top:769px;font-size:12px;line-height:17px;color:#e6e6e6;">0.0</div><svg style="left:14px;top:793px" width="10" height="10"><circle cx="5" cy="5" r="4.2" fill="none" stroke="#707070" stroke-width="1"/></svg><div class="t" style="left:30px;top:791px;font-size:12px;line-height:17px;color:#e6e6e6;">Shape Rotation</div><div class="a" style="left:177px;top:790px;width:94px;height:16px;background:#262626;border-radius:2px;"></div><div class="t" style="left:181px;top:791px;font-size:12px;line-height:17px;color:#6a6a6a;">#</div><div class="t" style="left:194px;top:791px;font-size:12px;line-height:17px;color:#e6e6e6;">0.0</div><svg style="left:14px;top:815px" width="10" height="10"><circle cx="5" cy="5" r="4.2" fill="none" stroke="#707070" stroke-width="1"/></svg><div class="t" style="left:30px;top:813px;font-size:12px;line-height:17px;color:#e6e6e6;">Shape Scale</div><div class="a" style="left:177px;top:812px;width:94px;height:16px;background:#262626;border-radius:2px;"></div><div class="t" style="left:181px;top:813px;font-size:12px;line-height:17px;color:#6a6a6a;">X</div><div class="t" style="left:194px;top:813px;font-size:12px;line-height:17px;color:#e6e6e6;">1.0</div><div class="a" style="left:277px;top:812px;width:94px;height:16px;background:#262626;border-radius:2px;"></div><div class="t" style="left:281px;top:813px;font-size:12px;line-height:17px;color:#6a6a6a;">Y</div><div class="t" style="left:294px;top:813px;font-size:12px;line-height:17px;color:#e6e6e6;">1.0</div><div class="a" style="left:377px;top:811px;width:16px;height:18px;background:#2b2b2b;border-radius:3px;border:1px solid #232323;"></div><svg style="left:381px;top:814px" width="8" height="12"><path d="M1 4V2.5Q4 -0.5 7 2.5V4M1 8V9.5Q4 12.5 7 9.5V8" fill="none" stroke="#bbb" stroke-width="1.1"/></svg><svg style="left:14px;top:837px" width="10" height="10"><circle cx="5" cy="5" r="4.2" fill="none" stroke="#707070" stroke-width="1"/></svg><div class="t" style="left:30px;top:835px;font-size:12px;line-height:17px;color:#e6e6e6;">Shape Skew</div><div class="a" style="left:177px;top:834px;width:94px;height:16px;background:#262626;border-radius:2px;"></div><div class="t" style="left:181px;top:835px;font-size:12px;line-height:17px;color:#6a6a6a;">X</div><div class="t" style="left:194px;top:835px;font-size:12px;line-height:17px;color:#e6e6e6;">0.0</div><div class="a" style="left:277px;top:834px;width:94px;height:16px;background:#262626;border-radius:2px;"></div><div class="t" style="left:281px;top:835px;font-size:12px;line-height:17px;color:#6a6a6a;">Y</div><div class="t" style="left:294px;top:835px;font-size:12px;line-height:17px;color:#e6e6e6;">0.0</div><svg style="left:14px;top:859px" width="10" height="10"><circle cx="5" cy="5" r="4.2" fill="none" stroke="#707070" stroke-width="1"/></svg><div class="t" style="left:30px;top:857px;font-size:12px;line-height:17px;color:#e6e6e6;">Shape Visibility</div><div class="a" style="left:177px;top:856px;width:16px;height:16px;background:#262626;border-radius:3px;"></div><svg style="left:179px;top:859px" width="12" height="10"><path d="M1 5.5L4.5 9L11 1.5" fill="none" stroke="#3ec46d" stroke-width="2.2"/></svg><svg style="left:14px;top:881px" width="10" height="10"><circle cx="5" cy="5" r="4.2" fill="none" stroke="#707070" stroke-width="1"/></svg><div class="t" style="left:30px;top:879px;font-size:12px;line-height:17px;color:#e6e6e6;">Shape Opacity</div><div class="a" style="left:177px;top:884px;width:190px;height:4px;background:#dadada;border-radius:2px;"></div><svg style="left:360px;top:880px" width="12" height="12"><circle cx="6" cy="6" r="5.2" fill="#4fbf97" stroke="#86d9bb" stroke-width="1"/><circle cx="6" cy="6" r="1.5" fill="#3a9c79"/></svg><div class="a" style="left:377px;top:878px;width:94px;height:16px;background:#262626;border-radius:2px;"></div><div class="t" style="left:381px;top:879px;font-size:12px;line-height:17px;color:#6a6a6a;">%</div><div class="t" style="left:394px;top:879px;font-size:12px;line-height:17px;color:#e6e6e6;">100.0</div><svg style="left:14px;top:903px" width="10" height="10"><circle cx="5" cy="5" r="4.2" fill="none" stroke="#707070" stroke-width="1"/></svg><div class="t" style="left:30px;top:901px;font-size:12px;line-height:17px;color:#e6e6e6;">Auto Id</div><div class="a" style="left:177px;top:900px;width:16px;height:16px;background:#262626;border-radius:3px;"></div><svg style="left:179px;top:903px" width="12" height="10"><path d="M1 5.5L4.5 9L11 1.5" fill="none" stroke="#3ec46d" stroke-width="2.2"/></svg><svg style="left:14px;top:925px" width="10" height="10"><circle cx="5" cy="5" r="4.2" fill="none" stroke="#707070" stroke-width="1"/></svg><div class="t" style="left:30px;top:923px;font-size:12px;line-height:17px;color:#8a8a8a;">Shape Id</div><div class="a" style="left:177px;top:922px;width:94px;height:16px;background:#262626;border-radius:2px;"></div><div class="t" style="left:181px;top:923px;font-size:12px;line-height:17px;color:#6a6a6a;">#</div><div class="t" style="left:194px;top:923px;font-size:12px;line-height:17px;color:#8a8a8a;">0</div><svg style="left:14px;top:947px" width="10" height="10"><circle cx="5" cy="5" r="4.2" fill="none" stroke="#707070" stroke-width="1"/></svg><div class="t" style="left:30px;top:945px;font-size:12px;line-height:17px;color:#e6e6e6;">Shape Time Offset</div><div class="a" style="left:177px;top:944px;width:94px;height:16px;background:#262626;border-radius:2px;"></div><div class="t" style="left:181px;top:945px;font-size:12px;line-height:17px;color:#6a6a6a;">#</div><div class="t" style="left:194px;top:945px;font-size:12px;line-height:17px;color:#e6e6e6;">0.0</div><div class="a" style="left:6px;top:963px;width:468px;height:5px;background:#2e2e2e;"></div><div class="a" style="left:6px;top:967px;width:468px;height:23px;background:#e9d66b;border-radius:2px;"></div><div class="a" style="left:10px;top:968px;width:460px;height:22px;background:#3a3a3a;"></div><svg style="left:14px;top:976px" width="9" height="5"><path d="M0.5 0.5L4.0 4L7.5 0.5" fill="none" stroke="#bdbdbd" stroke-width="1"/></svg><div class="a" style="left:28px;top:970px;width:18px;height:18px;background:#2b2b2b;border-radius:3px;"></div><svg style="left:50px;top:974px" width="10" height="10"><circle cx="4.5" cy="4.5" r="4" fill="none" stroke="#777" stroke-width="1"/></svg><svg style="left:66px;top:972px;position:absolute" width="14" height="14"><rect x="1.5" y="1.5" width="11" height="11" fill="none" stroke="#e8d56e" stroke-width="1.2" stroke-dasharray="3 2"/></svg><div class="t" style="left:87px;top:971px;font-size:12px;line-height:17px;color:#e6e6e6;">Ellipse Shape</div><div class="a" style="left:365px;top:970px;width:17px;height:18px;background:#2b2b2b;border-radius:3px;border:1px solid #262626;"></div><div class="a" style="left:410px;top:970px;width:17px;height:18px;background:#2b2b2b;border-radius:3px;border:1px solid #262626;"></div><div class="a" style="left:431px;top:970px;width:16px;height:18px;background:#2b2b2b;border-radius:3px;border:1px solid #262626;"></div><div class="a" style="left:450px;top:970px;width:17px;height:18px;background:#2b2b2b;border-radius:3px;border:1px solid #262626;"></div><div class="a" style="left:387px;top:970px;width:19px;height:18px;background:#2b2b2b;border-radius:3px;"></div><svg style="left:368px;top:974px" width="13" height="11"><path d="M0 1H6M0 5H4M7 5H12M0 9H6" stroke="#ddd" stroke-width="1.5"/></svg><div class="a" style="left:396px;top:970px;width:1px;height:18px;background:#3a3a3a;"></div><svg style="left:389px;top:974px" width="16" height="10"><path d="M7 1.5H4L1 5L4 8.5H7Z" fill="#d8c070"/><path d="M9 1.5H12L15 5L12 8.5H9Z" fill="#c84fff"/></svg><svg style="left:379px;top:984px" width="3" height="3"><path d="M3 0V3H0Z" fill="#5ec9a6"/></svg><svg style="left:443px;top:984px" width="3" height="3"><path d="M3 0V3H0Z" fill="#5ec9a6"/></svg><svg style="left:413px;top:972px" width="11" height="14"><path d="M3 0H8L7 5L10 8H1L4 5Z" fill="#ddd"/><path d="M5.5 8V14" stroke="#ddd" stroke-width="1.3"/></svg><svg style="left:433px;top:972px" width="13" height="14"><circle cx="2" cy="2" r="1.1" fill="#ddd"/><circle cx="7" cy="2" r="1.1" fill="#ddd"/><circle cx="2" cy="7" r="1.1" fill="#ddd"/><path d="M8 5L9 8L12 9L9 10L8 13L7 10L4 9L7 8Z" fill="#ddd"/></svg><svg style="left:453px;top:973px" width="12" height="12"><path d="M1 1L11 11M11 1L1 11" stroke="#ddd" stroke-width="1.2"/></svg><div class="a" style="left:6px;top:990px;width:468px;height:21px;background:#2c2c2c;"></div><div class="a" style="left:6px;top:990px;width:1px;height:34px;background:#3ec46d;"></div><div class="t" style="left:39px;top:994px;font-size:12px;line-height:17px;color:#c8c8c8;">Shape</div><div class="a" style="left:102px;top:991px;width:93px;height:20px;background:#474747;border-radius:3px 3px 0 0;"></div><div class="a" style="left:107px;top:996px;width:12px;height:12px;background:#8a4fff;border:1px solid #2a2a2a;border-radius:2px;"></div><div class="t" style="left:143px;top:994px;font-size:12px;line-height:17px;color:#e6e6e6;">Fill</div><svg style="left:200px;top:996px" width="12" height="12"><rect x="0" y="0" width="12" height="12" rx="2" fill="#2e2e2e"/><path d="M1 11L11 1" stroke="#8a4848" stroke-width="1.2"/></svg><div class="t" style="left:227px;top:994px;font-size:12px;line-height:17px;color:#c8c8c8;">Stroke</div><div class="t" style="left:286px;top:994px;font-size:12px;line-height:17px;color:#c8c8c8;">|</div><div class="t" style="left:316px;top:994px;font-size:12px;line-height:17px;color:#c8c8c8;">Masks</div><div class="t" style="left:379px;top:994px;font-size:12px;line-height:17px;color:#c8c8c8;">|</div><div class="t" style="left:401px;top:994px;font-size:12px;line-height:17px;color:#c8c8c8;">Advanced</div><div class="a" style="left:7px;top:1011px;width:467px;height:13px;background:#383838;border-radius:4px 4px 0 0;"></div><div class="t" style="left:30px;top:1015px;font-size:12px;line-height:17px;color:#e6e6e6;">Fill</div><div class="a" style="left:177px;top:1012px;width:16px;height:12px;background:#262626;border-radius:3px;"></div><svg style="left:179px;top:1015px" width="12" height="10"><path d="M1 5.5L4.5 9L11 1.5" fill="none" stroke="#3ec46d" stroke-width="2.2"/></svg><div class="a" style="left:0px;top:1024px;width:488px;height:5px;background:#1c1c1c;"></div><div class="a" style="left:503px;top:89px;width:2px;height:2px;background:#9a9a9a;"></div><div class="a" style="left:508px;top:89px;width:2px;height:2px;background:#9a9a9a;"></div><div class="a" style="left:513px;top:89px;width:2px;height:2px;background:#9a9a9a;"></div><div class="a" style="left:495px;top:96px;width:28px;height:28px;background:#161616;border-radius:4px;"></div><svg style="left:495px;top:96px" width="28" height="28"><path d="M9 5L21 16H15L17 22L14 23L12 17L9 20Z" fill="none" stroke="#3ec46d" stroke-width="1.3" stroke-linejoin="round"/></svg><svg style="left:495px;top:126px" width="28" height="28"><path d="M8 6L22 17H14L9 22Z" fill="#e6e6e6"/></svg><svg style="left:495px;top:156px" width="28" height="28"><path d="M7 7L17 10L21 18L18 21L10 17Z" fill="#e6e6e6"/><path d="M7 7L13 13" stroke="#464646" stroke-width="1.2"/><circle cx="13.5" cy="13.5" r="1.5" fill="#464646"/><path d="M18 21L21 18L22 20L20 22Z" fill="#e6e6e6"/></svg><svg style="left:495px;top:186px" width="28" height="28"><path d="M8 21L10 16L19 7L22 10L13 19Z" fill="#e6e6e6"/><path d="M7 22L9 20" stroke="#e6e6e6" stroke-width="1"/></svg><svg style="left:495px;top:216px" width="28" height="28"><rect x="7" y="6" width="7" height="1.5" fill="#e6e6e6"/><path d="M4 9H17V18L15 20H4Z" fill="#e6e6e6"/><circle cx="7" cy="12" r="1.1" fill="#444"/><path d="M18 14L24 10V19Z" fill="#e6e6e6"/></svg><svg style="left:495px;top:246px" width="28" height="28"><path d="M6 23L23 6" stroke="#e6e6e6" stroke-width="1"/></svg><svg style="left:495px;top:276px" width="28" height="28"><path d="M6 6H22V10H16V23H12V10H6Z" fill="#e6e6e6"/></svg><svg style="left:495px;top:306px" width="28" height="28"><path d="M7 6L15 10L11 12L10 17Z" fill="#e6e6e6"/><path d="M6 22H22L20 6M6 22L7 12" stroke="#e6e6e6" stroke-width="1" stroke-dasharray="2 2" fill="none"/></svg><svg style="left:495px;top:336px" width="28" height="28"><rect x="7" y="7" width="14" height="14" fill="#e6e6e6"/></svg><svg style="left:495px;top:366px" width="28" height="28"><circle cx="14" cy="14" r="8" fill="#e6e6e6"/></svg><svg style="left:495px;top:396px" width="28" height="28"><path d="M14 5L22 11L19 21H9L6 11Z" fill="#e6e6e6"/></svg><svg style="left:495px;top:426px" width="28" height="28"><path d="M14 4L16.5 11H23L17.5 15L19.5 22L14 18L8.5 22L10.5 15L5 11H11.5Z" fill="#e6e6e6"/></svg><svg style="left:495px;top:456px" width="28" height="28"><path d="M9 19A7 7 0 1 1 21 15" fill="none" stroke="#e6e6e6" stroke-width="3.5"/></svg><svg style="left:495px;top:486px" width="28" height="28"><path d="M14 5Q15 13 23 14Q15 15 14 23Q13 15 5 14Q13 13 14 5Z" fill="#e6e6e6"/></svg><svg style="left:495px;top:516px" width="28" height="28"><circle cx="14" cy="14" r="5.5" fill="none" stroke="#e6e6e6" stroke-width="3"/><path d="M14 5V8M14 20V23M5 14H8M20 14H23M7.6 7.6L9.7 9.7M18.3 18.3L20.4 20.4M7.6 20.4L9.7 18.3M18.3 9.7L20.4 7.6" stroke="#e6e6e6" stroke-width="3"/></svg><svg style="left:495px;top:556px" width="28" height="28"><path d="M9 10L13 14L9 18M14 10L18 14L14 18" fill="none" stroke="#bbb" stroke-width="1.2"/></svg><svg style="left:694px;top:127px" width="728" height="409"><circle cx="326" cy="243" r="45.5" fill="#8f4fff"/><text x="326" y="252.5" font-family="Liberation Sans" font-size="26.5" fill="#fff" text-anchor="middle">0</text><circle cx="364" cy="243" r="45.5" fill="#ff4f5f"/><text x="364" y="252.5" font-family="Liberation Sans" font-size="26.5" fill="#fff" text-anchor="middle">1</text><circle cx="402" cy="243" r="45.5" fill="#4f9fff"/><text x="402" y="252.5" font-family="Liberation Sans" font-size="26.5" fill="#fff" text-anchor="middle">2</text><circle cx="326" cy="205" r="45.5" fill="#8f4fff"/><text x="326" y="214.5" font-family="Liberation Sans" font-size="26.5" fill="#fff" text-anchor="middle">3</text><circle cx="364" cy="205" r="45.5" fill="#4fffaf"/><text x="364" y="214.5" font-family="Liberation Sans" font-size="26.5" fill="#fff" text-anchor="middle">4</text><circle cx="402" cy="205" r="45.5" fill="#fd4fbf"/><text x="402" y="214.5" font-family="Liberation Sans" font-size="26.5" fill="#fff" text-anchor="middle">5</text><circle cx="326" cy="167" r="45.5" fill="#ff6f4f"/><text x="326" y="176.5" font-family="Liberation Sans" font-size="26.5" fill="#fff" text-anchor="middle">6</text><circle cx="364" cy="167" r="45.5" fill="#fd4fbf"/><text x="364" y="176.5" font-family="Liberation Sans" font-size="26.5" fill="#fff" text-anchor="middle">7</text><circle cx="402" cy="167" r="45.5" fill="#ff4f5f"/><text x="402" y="176.5" font-family="Liberation Sans" font-size="26.5" fill="#fff" text-anchor="middle">8</text></svg><svg style="left:1008px;top:282px" width="100" height="100"><rect x="4.5" y="4.5" width="91" height="91" fill="none" stroke="#45c46f" stroke-width="1"/><rect x="0.5" y="0.5" width="8" height="8" fill="#fff" stroke="#45c46f" stroke-width="1"/><rect x="0.5" y="91.5" width="8" height="8" fill="#fff" stroke="#45c46f" stroke-width="1"/><rect x="91.5" y="0.5" width="8" height="8" fill="#fff" stroke="#45c46f" stroke-width="1"/><rect x="91.5" y="91.5" width="8" height="8" fill="#fff" stroke="#45c46f" stroke-width="1"/></svg><div class="a" style="left:1012px;top:270px;width:9px;height:9px;background:#ffe08a;"></div><div class="t" style="left:1025px;top:268px;font-size:12px;line-height:17px;color:#1a0a10;-webkit-text-stroke:0.3px #1a0a10;">Ellipse Shape</div><svg style="left:1049px;top:322px" width="18" height="21"><rect x="0.5" y="0.5" width="17" height="19" fill="none" stroke="#555" stroke-width="1"/><circle cx="9" cy="10" r="5" fill="none" stroke="#444" stroke-width="1"/><circle cx="9" cy="10" r="1.2" fill="#444"/></svg><div class="t" style="left:570px;top:460px;font-size:11.6px;line-height:14px;color:#f0f0f0">Hold S <span style="color:#505050">Direct Layer Selection</span></div><div class="t" style="left:570px;top:474px;font-size:11.6px;line-height:14px;color:#f0f0f0">Space <span style="color:#505050">Play/ Stop</span></div><div class="t" style="left:570px;top:488px;font-size:11.6px;line-height:14px;color:#f0f0f0">Space + click + drag <span style="color:#505050">Pan</span></div><div class="t" style="left:570px;top:502px;font-size:11.6px;line-height:14px;color:#f0f0f0">Alt + click + drag <span style="color:#505050">Move Pivot Point</span></div><div class="t" style="left:570px;top:516px;font-size:11.6px;line-height:14px;color:#f0f0f0">Shift <span style="color:#505050">Enable Snapping</span></div><div class="a" style="left:693px;top:455px;width:120px;height:80px;overflow:hidden"><div class="t" style="left:-123px;top:5px;font-size:11.6px;line-height:14px;color:transparent">Hold S <span style="color:#5d62b4">Direct Layer Selection</span></div><div class="t" style="left:-123px;top:19px;font-size:11.6px;line-height:14px;color:transparent">Space <span style="color:#5d62b4">Play/ Stop</span></div><div class="t" style="left:-123px;top:33px;font-size:11.6px;line-height:14px;color:transparent">Space + click + drag <span style="color:#5d62b4">Pan</span></div><div class="t" style="left:-123px;top:47px;font-size:11.6px;line-height:14px;color:transparent">Alt + click + drag <span style="color:#5d62b4">Move Pivot Point</span></div><div class="t" style="left:-123px;top:61px;font-size:11.6px;line-height:14px;color:transparent">Shift <span style="color:#5d62b4">Enable Snapping</span></div></div><div class="t" style="left:998px;top:536px;font-size:12px;line-height:17px;color:#ececec;">Viewport Quality: High</div><div class="a" style="left:535px;top:561px;width:76px;height:17px;background:#2a2a2a;border-radius:3px;"></div><div class="t" style="left:539px;top:562px;font-size:12px;line-height:17px;color:#e6e6e6;">38%</div><svg style="left:599px;top:567px" width="10" height="6"><path d="M0.5 0.5L4.5 5L8.5 0.5" fill="none" stroke="#cfcfcf" stroke-width="1"/></svg><div class="a" style="left:867px;top:560px;width:99px;height:18px;background:#2b2b2b;border-radius:3px;border:1px solid #222;"></div><div class="a" style="left:886px;top:560px;width:1px;height:18px;background:#222;"></div><div class="a" style="left:906px;top:560px;width:1px;height:18px;background:#222;"></div><div class="a" style="left:925px;top:560px;width:1px;height:18px;background:#222;"></div><div class="a" style="left:945px;top:560px;width:1px;height:18px;background:#222;"></div><svg style="left:867px;top:560px" width="99" height="18"><rect x="4" y="4" width="1.5" height="10" fill="#dcdcdc"/><path d="M13 4V14L6 9Z" fill="#dcdcdc"/><path d="M30 4V14L23 9Z" fill="#dcdcdc"/><rect x="32" y="4" width="1.5" height="10" fill="#dcdcdc"/><path d="M45 4V14L52 9Z" fill="#dcdcdc"/><rect x="63" y="4" width="1.5" height="10" fill="#dcdcdc"/><path d="M66 4V14L73 9Z" fill="#dcdcdc"/><path d="M83 4V14L90 9Z" fill="#dcdcdc"/><rect x="91" y="4" width="1.5" height="10" fill="#dcdcdc"/></svg><div class="a" style="left:971px;top:560px;width:20px;height:18px;background:#2b2b2b;border-radius:3px;border:1px solid #222;"></div><svg style="left:974px;top:563px" width="14" height="12"><path d="M1 4V10H13V4H10" fill="none" stroke="#dcdcdc" stroke-width="1.3"/><path d="M5 6Q5 2 10 2M8 0L11 2L8 4" fill="none" stroke="#dcdcdc" stroke-width="1.2"/></svg><div class="a" style="left:1232px;top:560px;width:37px;height:18px;background:#2b2b2b;border-radius:3px;border:1px solid #222;"></div><svg style="left:1234px;top:563px" width="16" height="12"><path d="M1 6L5 2H14V10H5Z" fill="#cfcfcf"/><circle cx="5.5" cy="6" r="1.6" fill="#2b2b2b"/></svg><div class="t" style="left:1257px;top:562px;font-size:12px;line-height:17px;color:#c0c8dc;">0</div><div class="a" style="left:1272px;top:560px;width:31px;height:18px;background:#2b2b2b;border-radius:3px;border:1px solid #222;"></div><div class="a" style="left:1291px;top:560px;width:1px;height:18px;background:#222;"></div><svg style="left:1293px;top:565px" width="8" height="8"><path d="M1 0.5L6.5 4L1 7.5Z" fill="none" stroke="#9a9a9a" stroke-width="1"/></svg><svg style="left:1275px;top:563px" width="14" height="12"><path d="M1 4H4L8 1V11L4 8H1Z" fill="#3ec46d"/><path d="M10 3Q12 6 10 9M12 1.5Q15 6 12 10.5" fill="none" stroke="#3ec46d" stroke-width="1.1"/></svg><div class="a" style="left:1307px;top:560px;width:31px;height:18px;background:#2b2b2b;border-radius:3px;border:1px solid #222;"></div><div class="a" style="left:1326px;top:560px;width:1px;height:18px;background:#222;"></div><svg style="left:1328px;top:565px" width="8" height="8"><path d="M1 0.5L6.5 4L1 7.5Z" fill="none" stroke="#9a9a9a" stroke-width="1"/></svg><svg style="left:1309px;top:562px" width="14" height="14"><path d="M3 8A5 5 0 0 1 12 6L10 9" fill="none" stroke="#dcdcdc" stroke-width="2.4"/></svg><div class="a" style="left:1343px;top:560px;width:30px;height:18px;background:#2b2b2b;border-radius:3px;border:1px solid #222;"></div><div class="a" style="left:1361px;top:560px;width:1px;height:18px;background:#222;"></div><svg style="left:1363px;top:565px" width="8" height="8"><path d="M1 0.5L6.5 4L1 7.5Z" fill="none" stroke="#9a9a9a" stroke-width="1"/></svg><svg style="left:1345px;top:562px" width="14" height="14"><path d="M4 1V13M9 1V13M1 4H13M1 9H13" stroke="#dcdcdc" stroke-width="1.1"/></svg><div class="a" style="left:1377px;top:560px;width:19px;height:18px;background:#2b2b2b;border-radius:3px;border:1px solid #222;"></div><svg style="left:1379px;top:563px" width="16" height="12"><rect x="0" y="0" width="3" height="2.5" fill="#3ec46d"/><rect x="0" y="4" width="3" height="7" fill="#3ec46d"/><rect x="5" y="1" width="10" height="4.5" fill="none" stroke="#3ec46d" stroke-width="1.3"/><rect x="4.5" y="7" width="11" height="4" fill="#3ec46d"/></svg><div class="a" style="left:1400px;top:560px;width:19px;height:18px;background:#2b2b2b;border-radius:3px;border:1px solid #222;"></div><svg style="left:1403px;top:564px" width="14" height="10"><path d="M0 0L4 5L0 10H3L7 5L3 0ZM5 0L9 5L5 10H8L12 5L8 0Z" fill="#cfcfcf"/></svg><div class="a" style="left:1423px;top:560px;width:31px;height:18px;background:#2b2b2b;border-radius:3px;border:1px solid #222;"></div><div class="a" style="left:1442px;top:560px;width:1px;height:18px;background:#222;"></div><svg style="left:1444px;top:565px" width="8" height="8"><path d="M1 0.5L6.5 4L1 7.5Z" fill="none" stroke="#9a9a9a" stroke-width="1"/></svg><svg style="left:1426px;top:563px" width="16" height="12"><rect x="0.5" y="0.5" width="14" height="9" fill="none" stroke="#cfcfcf" stroke-width="1.1"/><rect x="0" y="10" width="15" height="2" fill="#cfcfcf"/></svg><div class="a" style="left:1458px;top:560px;width:31px;height:18px;background:#2b2b2b;border-radius:3px;border:1px solid #222;"></div><div class="a" style="left:1477px;top:560px;width:1px;height:18px;background:#222;"></div><svg style="left:1479px;top:565px" width="8" height="8"><path d="M1 0.5L6.5 4L1 7.5Z" fill="none" stroke="#9a9a9a" stroke-width="1"/></svg><svg style="left:1461px;top:563px" width="14" height="13"><rect x="0.5" y="0.5" width="7" height="5" fill="none" stroke="#cfcfcf" stroke-width="1"/><path d="M2 7.5H10V2M4 9.5H12V4M6 11.5H14V6" fill="none" stroke="#aaa" stroke-width="0.9"/></svg><div class="a" style="left:1493px;top:560px;width:31px;height:18px;background:#2b2b2b;border-radius:3px;border:1px solid #222;"></div><div class="a" style="left:1512px;top:560px;width:1px;height:18px;background:#222;"></div><svg style="left:1514px;top:565px" width="8" height="8"><path d="M1 0.5L6.5 4L1 7.5Z" fill="none" stroke="#9a9a9a" stroke-width="1"/></svg><svg style="left:1496px;top:562px" width="14" height="14"><rect x="0" y="0" width="9" height="9" fill="#bbb"/><rect x="4.5" y="4.5" width="8" height="8" fill="#2b2b2b" stroke="#dcdcdc" stroke-width="1.2"/></svg><div class="a" style="left:1528px;top:560px;width:31px;height:18px;background:#2b2b2b;border-radius:3px;border:1px solid #222;"></div><div class="a" style="left:1547px;top:560px;width:1px;height:18px;background:#222;"></div><svg style="left:1549px;top:565px" width="8" height="8"><path d="M1 0.5L6.5 4L1 7.5Z" fill="none" stroke="#9a9a9a" stroke-width="1"/></svg><svg style="left:1531px;top:563px" width="13" height="13"><rect x="0.0" y="0.0" width="3.3" height="3.3" fill="#3ec46d"/><rect x="0.0" y="6.6" width="3.3" height="3.3" fill="#3ec46d"/><rect x="3.3" y="3.3" width="3.3" height="3.3" fill="#3ec46d"/><rect x="3.3" y="9.899999999999999" width="3.3" height="3.3" fill="#3ec46d"/><rect x="6.6" y="0.0" width="3.3" height="3.3" fill="#3ec46d"/><rect x="6.6" y="6.6" width="3.3" height="3.3" fill="#3ec46d"/><rect x="9.899999999999999" y="3.3" width="3.3" height="3.3" fill="#3ec46d"/><rect x="9.899999999999999" y="9.899999999999999" width="3.3" height="3.3" fill="#3ec46d"/></svg><div class="a" style="left:1563px;top:560px;width:19px;height:18px;background:#2b2b2b;border-radius:3px;border:1px solid #222;"></div><svg style="left:1566px;top:563px" width="13" height="13"><circle cx="6.5" cy="6.5" r="3.5" fill="none" stroke="#dcdcdc" stroke-width="2.2"/><path d="M6.5 0V3M6.5 10V13M0 6.5H3M10 6.5H13M2 2L4 4M9 9L11 11M2 11L4 9M9 4L11 2" stroke="#dcdcdc" stroke-width="2"/></svg><div class="a" style="left:1593px;top:107px;width:307px;height:378px;overflow:hidden"><div class="a" style="left:53px;top:-47px;width:200px;height:200px;border-radius:50%;background:conic-gradient(from 90deg,#ff0000,#ff00ff,#0000ff,#00ffff,#00ff00,#ffff00,#ff0000);-webkit-mask:radial-gradient(circle,transparent 74.5px,#000 75.5px,#000 99.5px,transparent 100.5px);mask:radial-gradient(circle,transparent 74.5px,#000 75.5px,#000 99.5px,transparent 100.5px)"></div></div><div class="a" style="left:1702px;top:116px;width:90px;height:90px;background:linear-gradient(to right,#000,rgba(0,0,0,0)),linear-gradient(to bottom,#fff,#ff3fb3 50%,#c2007a)"></div><svg style="left:1784px;top:171px" width="14" height="14"><circle cx="7" cy="7" r="6" fill="none" stroke="#f0f0f0" stroke-width="1.2"/></svg><svg style="left:1807px;top:208px" width="14" height="14"><circle cx="7" cy="7" r="6" fill="none" stroke="#f0f0f0" stroke-width="1.2"/></svg><div class="a" style="left:1600px;top:273px;width:22px;height:22px;background:#fd4fbf;border-radius:3px;"></div><div class="t" style="left:1625px;top:276px;font-size:12px;line-height:17px;color:#e6e6e6;">Hot Pink</div><div class="a" style="left:1871px;top:273px;width:21px;height:21px;background:#2b2b2b;border-radius:3px;border:1px solid #222;"></div><svg style="left:1875px;top:277px" width="13" height="13"><path d="M1 12L7.5 5.5M6 4L9 7M8 3L10 1L12 3L10 5" stroke="#dcdcdc" stroke-width="1.5" fill="none"/></svg><div class="a" style="left:1600px;top:299px;width:49px;height:18px;background:#474747;border:1px solid #3a3a3a;border-radius:3px;"></div><div class="t" style="left:1603px;top:301px;font-size:12px;line-height:17px;color:#e6e6e6;">Hex</div><svg style="left:1639px;top:306px" width="10" height="6"><path d="M0.5 0.5L4.5 5L8.5 0.5" fill="none" stroke="#cfcfcf" stroke-width="1"/></svg><div class="a" style="left:1653px;top:298px;width:240px;height:22px;background:#262626;border-radius:3px;"></div><div class="t" style="left:1658px;top:302px;font-size:12px;line-height:17px;color:#5a5a5a;">#</div><div class="t" style="left:1670px;top:302px;font-size:12px;line-height:17px;color:#e6e6e6;">fd4fbf</div><div class="a" style="left:1600px;top:330px;width:235px;height:4px;background:#dadada;border-radius:2px;"></div><svg style="left:1828px;top:326px" width="12" height="12"><circle cx="6" cy="6" r="5.2" fill="#4fbf97" stroke="#86d9bb" stroke-width="1"/><circle cx="6" cy="6" r="1.5" fill="#3a9c79"/></svg><div class="a" style="left:1850px;top:324px;width:43px;height:16px;background:#262626;border-radius:3px;"></div><div class="t" style="left:1854px;top:325px;font-size:12px;line-height:17px;color:#5a5a5a;">A</div><div class="t" style="left:1866px;top:325px;font-size:12px;line-height:17px;color:#e6e6e6;">255</div><div class="a" style="left:1597px;top:346px;width:299px;height:22px;background:#1c1c1c;"></div><div class="a" style="left:1599px;top:348px;width:148px;height:20px;background:#474747;border-radius:3px 3px 0 0;"></div><div class="t" style="left:1648px;top:351px;font-size:12px;line-height:17px;color:#e6e6e6;">Swatches</div><div class="t" style="left:1793px;top:351px;font-size:12px;line-height:17px;color:#c8c8c8;">Generator</div><div class="a" style="left:1598px;top:371px;width:259px;height:19px;background:#565656;border-radius:3px;"></div><div class="a" style="left:1599px;top:372px;width:62px;height:17px;background:#262626;border-radius:3px;"></div><svg style="left:1606px;top:375px" width="10" height="11"><path d="M1 1V10M4 1V10M6 1L9 10" stroke="#3ec46d" stroke-width="1.6"/></svg><div class="t" style="left:1621px;top:373px;font-size:12px;line-height:17px;color:#e6e6e6;">Library</div><svg style="left:1671px;top:375px" width="10" height="10"><rect x="0" y="2" width="10" height="8" fill="#ccc"/><rect x="0" y="0" width="5" height="2" fill="#ccc"/><path d="M2 5H8M2 7.5H8" stroke="#555" stroke-width="1"/></svg><div class="t" style="left:1687px;top:373px;font-size:12px;line-height:17px;color:#e6e6e6;">Project</div><svg style="left:1738px;top:375px" width="9" height="11"><path d="M0.5 0.5H6L8.5 3V10.5H0.5Z" fill="none" stroke="#ccc" stroke-width="1"/></svg><div class="t" style="left:1752px;top:373px;font-size:12px;line-height:17px;color:#e6e6e6;">Scene</div><svg style="left:1800px;top:375px" width="11" height="11"><path d="M5.5 0.5A5 5 0 1 0 10.5 5.5V3L8 0.5Z" fill="none" stroke="#ccc" stroke-width="1"/></svg><div class="t" style="left:1816px;top:373px;font-size:12px;line-height:17px;color:#e6e6e6;">Labels</div><div class="a" style="left:1858px;top:371px;width:37px;height:19px;background:#565656;border-radius:3px;"></div><div class="a" style="left:1859px;top:372px;width:17px;height:17px;background:#262626;border-radius:3px;"></div><svg style="left:1862px;top:375px" width="11" height="11"><rect x="1" y="1" width="3.5" height="3.5" fill="#3ec46d"/><rect x="6.5" y="1" width="3.5" height="3.5" fill="#3ec46d"/><rect x="1" y="6.5" width="3.5" height="3.5" fill="#3ec46d"/><rect x="6.5" y="6.5" width="3.5" height="3.5" fill="#3ec46d"/></svg><svg style="left:1879px;top:375px" width="12" height="11"><path d="M0 1.5H11M0 5.5H11M0 9.5H11" stroke="#ddd" stroke-width="1.2"/></svg><div class="a" style="left:1598px;top:393px;width:276px;height:17px;background:#565656;border-radius:3px;"></div><div class="t" style="left:1601px;top:394px;font-size:12px;line-height:17px;color:#e6e6e6;">new</div><svg style="left:1860px;top:399px" width="10" height="6"><path d="M0.5 0.5L4.5 5L8.5 0.5" fill="none" stroke="#cfcfcf" stroke-width="1"/></svg><div class="a" style="left:1881px;top:400px;width:2px;height:2px;background:#cfcfcf;"></div><div class="a" style="left:1886px;top:400px;width:2px;height:2px;background:#cfcfcf;"></div><div class="a" style="left:1891px;top:400px;width:2px;height:2px;background:#cfcfcf;"></div><div class="a" style="left:1598px;top:411px;width:297px;height:73px;background:#262626;"></div><div class="a" style="left:1600px;top:412px;width:18px;height:18px;background:#8f4fff;border-radius:3px;"></div><div class="a" style="left:1622px;top:412px;width:18px;height:18px;background:#4f9fff;border-radius:3px;"></div><div class="a" style="left:1644px;top:412px;width:18px;height:18px;background:#ff6f4f;border-radius:3px;"></div><div class="a" style="left:1666px;top:412px;width:18px;height:18px;background:#4fffaf;border-radius:3px;"></div><div class="a" style="left:1688px;top:412px;width:18px;height:18px;background:#ff4f5f;border-radius:3px;"></div><div class="a" style="left:1710px;top:412px;width:18px;height:18px;background:#fd4fbf;border-radius:3px;"></div><div class="a" style="left:1900px;top:107px;width:14px;height:377px;background:#2a2a2a;"></div><div class="a" style="left:1902px;top:156px;width:10px;height:299px;background:#4b4b4b;border-radius:5px;"></div><div class="t" style="left:1601px;top:524px;font-size:12px;line-height:17px;color:#e6e6e6;">Alignment</div><div class="t" style="left:1601px;top:552px;font-size:12px;line-height:17px;color:#e6e6e6;">Distribution</div><div class="a" style="left:1790px;top:522px;width:54px;height:18px;background:#2b2b2b;border-radius:4px;border:1px solid #1c1c1c;"></div><div class="a" style="left:1792px;top:523px;width:15px;height:1px;background:#4a4a4a;"></div><div class="a" style="left:1810px;top:523px;width:15px;height:1px;background:#4a4a4a;"></div><div class="a" style="left:1828px;top:523px;width:15px;height:1px;background:#4a4a4a;"></div><div class="a" style="left:1808px;top:522px;width:1px;height:18px;background:#1c1c1c;"></div><div class="a" style="left:1826px;top:522px;width:1px;height:18px;background:#1c1c1c;"></div><svg style="left:1792px;top:524px" width="14" height="14"><path d="M1.5 1V13" stroke="#e0e0e0"/><path d="M3 5H9M3 9H12" stroke="#e0e0e0" stroke-width="1.8"/></svg><svg style="left:1810px;top:524px" width="14" height="14"><path d="M7 1V13" stroke="#e0e0e0"/><path d="M4 5H10M2 9H12" stroke="#e0e0e0" stroke-width="1.8"/></svg><svg style="left:1828px;top:524px" width="14" height="14"><path d="M12.5 1V13" stroke="#e0e0e0"/><path d="M5 5H11M2 9H11" stroke="#e0e0e0" stroke-width="1.8"/></svg><div class="a" style="left:1852px;top:522px;width:54px;height:18px;background:#2b2b2b;border-radius:4px;border:1px solid #1c1c1c;"></div><div class="a" style="left:1854px;top:523px;width:15px;height:1px;background:#4a4a4a;"></div><div class="a" style="left:1872px;top:523px;width:15px;height:1px;background:#4a4a4a;"></div><div class="a" style="left:1890px;top:523px;width:15px;height:1px;background:#4a4a4a;"></div><div class="a" style="left:1870px;top:522px;width:1px;height:18px;background:#1c1c1c;"></div><div class="a" style="left:1888px;top:522px;width:1px;height:18px;background:#1c1c1c;"></div><svg style="left:1854px;top:524px" width="14" height="14"><path d="M1 1.5H13" stroke="#e0e0e0"/><path d="M5 3V12M9 3V8" stroke="#e0e0e0" stroke-width="1.8"/></svg><svg style="left:1872px;top:524px" width="14" height="14"><path d="M1 7H13" stroke="#e0e0e0"/><path d="M5 2V12M9 4V10" stroke="#e0e0e0" stroke-width="1.8"/></svg><svg style="left:1890px;top:524px" width="14" height="14"><path d="M1 12.5H13" stroke="#e0e0e0"/><path d="M5 6V11M9 2V11" stroke="#e0e0e0" stroke-width="1.8"/></svg><div class="a" style="left:1790px;top:550px;width:54px;height:18px;background:#2b2b2b;border-radius:4px;border:1px solid #1c1c1c;"></div><div class="a" style="left:1792px;top:551px;width:15px;height:1px;background:#4a4a4a;"></div><div class="a" style="left:1810px;top:551px;width:15px;height:1px;background:#4a4a4a;"></div><div class="a" style="left:1828px;top:551px;width:15px;height:1px;background:#4a4a4a;"></div><div class="a" style="left:1808px;top:550px;width:1px;height:18px;background:#1c1c1c;"></div><div class="a" style="left:1826px;top:550px;width:1px;height:18px;background:#1c1c1c;"></div><svg style="left:1792px;top:552px" width="14" height="14"><path d="M1.5 1V13M12.5 1V13" stroke="#e0e0e0"/><path d="M7 3V11" stroke="#e0e0e0" stroke-width="1.8"/></svg><svg style="left:1810px;top:552px" width="14" height="14"><path d="M1 1.5H13M1 12.5H13" stroke="#e0e0e0"/><path d="M3 7H11" stroke="#e0e0e0" stroke-width="1.8"/></svg><svg style="left:1828px;top:552px" width="14" height="14"><path d="M0.5 3V0.5H3M11 0.5H13.5V3M0.5 11V13.5H3M11 13.5H13.5V11" stroke="#e0e0e0" fill="none"/><path d="M3.5 7V11M7.5 5V9M11.5 3V7" stroke="#e0e0e0" stroke-width="1.8"/></svg><div class="a" style="left:494px;top:608px;width:490px;height:368px;background:#2a2a2a;"></div><div class="a" style="left:990px;top:608px;width:924px;height:368px;background:#262626;"></div><div class="a" style="left:984px;top:608px;width:4px;height:368px;background:#2a2a2a;"></div><div class="a" style="left:988px;top:631px;width:3px;height:345px;background:#1e1e1e;"></div><div class="a" style="left:494px;top:630px;width:490px;height:1px;background:#3a3a3a;"></div><div class="t" style="left:686px;top:613px;font-size:12px;line-height:17px;color:#bdbdbd;">Composition 1</div><svg style="left:950px;top:614px" width="11" height="11"><path d="M1 1L10 10M10 1L1 10" stroke="#bdbdbd" stroke-width="1.1"/></svg><div class="a" style="left:969px;top:613px;width:1px;height:13px;background:#bdbdbd;"></div><div class="a" style="left:494px;top:631px;width:490px;height:41px;background:#3b3b3b;"></div><div class="a" style="left:496px;top:632px;width:279px;height:20px;background:#262626;border-radius:10px;"></div><svg style="left:500px;top:636px" width="14" height="14"><circle cx="5.5" cy="5.5" r="4.5" fill="none" stroke="#e0e0e0" stroke-width="1.2"/><path d="M9 9L12 12" stroke="#e0e0e0" stroke-width="2"/></svg><div class="t" style="left:520px;top:635px;font-size:12px;line-height:17px;color:#8a8a8a;">Enter a layer name</div><div class="a" style="left:779px;top:634px;width:16px;height:17px;background:#2b2b2b;border-radius:3px;border:1px solid #1f1f1f;"></div><svg style="left:782px;top:637px" width="10" height="10"><path d="M5 0.5V9.5M0.5 5H9.5" stroke="#e6e6e6" stroke-width="1.6"/></svg><div class="a" style="left:823px;top:633px;width:19px;height:19px;background:#2b2b2b;border-radius:3px;border:1px solid #1f1f1f;"></div><div class="a" style="left:845px;top:633px;width:19px;height:19px;background:#2b2b2b;border-radius:3px;border:1px solid #1f1f1f;"></div><div class="a" style="left:867px;top:633px;width:19px;height:19px;background:#2b2b2b;border-radius:3px;border:1px solid #1f1f1f;"></div><svg style="left:826px;top:636px" width="14" height="14"><circle cx="8" cy="6" r="5" fill="#ddd"/><path d="M1 10Q4 13 8 12M2 8Q4 11 7 11" stroke="#999" stroke-width="1.2" fill="none"/></svg><svg style="left:848px;top:636px" width="14" height="14"><circle cx="2" cy="2" r="1.1" fill="#ddd"/><circle cx="7" cy="2" r="1.1" fill="#ddd"/><circle cx="2" cy="7" r="1.1" fill="#ddd"/><path d="M8 5L9 8L12 9L9 10L8 13L7 10L4 9L7 8Z" fill="#ddd"/></svg><svg style="left:870px;top:636px" width="14" height="14"><path d="M0 2H13M0 7H13M0 12H13" stroke="#ccc" stroke-width="1"/><circle cx="4" cy="2" r="1.8" fill="#2b2b2b" stroke="#ccc"/><circle cx="9" cy="7" r="1.8" fill="#2b2b2b" stroke="#ccc"/><circle cx="5" cy="12" r="1.8" fill="#2b2b2b" stroke="#ccc"/></svg><div class="a" style="left:889px;top:633px;width:93px;height:19px;background:#262626;border-radius:3px;"></div><div class="t" style="left:894px;top:635px;font-size:12px;line-height:17px;color:#555;">F</div><div class="t" style="left:905px;top:635px;font-size:12px;line-height:17px;color:#e6e6e6;">108</div><svg style="left:499px;top:656px" width="12" height="14"><path d="M3 6V4A3 3 0 0 1 9 4V6" fill="none" stroke="#cfcfcf" stroke-width="1.3"/><rect x="1.5" y="6" width="9" height="7" fill="#cfcfcf"/><rect x="5" y="9" width="2" height="2" fill="#3b3b3b"/></svg><svg style="left:516px;top:658px" width="15" height="10"><path d="M1 5Q7.5 -1 14 5Q7.5 11 1 5Z" fill="none" stroke="#cfcfcf" stroke-width="1.1"/><circle cx="7.5" cy="5" r="2" fill="#cfcfcf"/></svg><svg style="left:537px;top:656px" width="13" height="14"><path d="M6.5 1L12 4V10L6.5 13L1 10V4Z M1 4L6.5 7L12 4M6.5 7V13" fill="none" stroke="#cfcfcf" stroke-width="1.1"/></svg><svg style="left:555px;top:656px" width="14" height="13"><path d="M1 4.5H4L8 1V12L4 8.5H1Z" fill="#cfcfcf"/><path d="M10 4Q11.5 6.5 10 9M11.5 2Q14 6.5 11.5 11" fill="none" stroke="#cfcfcf" stroke-width="1"/></svg><svg style="left:575px;top:656px" width="12" height="13"><path d="M1 12L7 6M6 4.5L8.5 7M7.5 3.5L10 1L12 3L9.5 5.5" stroke="#bbb" stroke-width="1.4" fill="none"/></svg><svg style="left:593px;top:658px" width="15" height="10"><path d="M0.5 5L4 1H14V9H4Z" fill="#cfcfcf"/><circle cx="4.5" cy="5" r="1.4" fill="#3b3b3b"/></svg><div class="t" style="left:649px;top:656px;font-size:12px;line-height:17px;color:#e6e6e6;">Name</div><div class="a" style="left:494px;top:672px;width:476px;height:198px;background:#363636;"></div><div class="a" style="left:496px;top:674px;width:18px;height:17px;background:#262626;border-radius:3px;"></div><div class="a" style="left:515px;top:674px;width:18px;height:17px;background:#262626;border-radius:3px;"></div><svg style="left:518px;top:677px" width="12" height="12"><circle cx="6" cy="6" r="4.8" fill="none" stroke="#cfcfcf" stroke-width="1.1"/><path d="M3.5 6L5.5 8L11 2" fill="none" stroke="#cfcfcf" stroke-width="1.4"/></svg><div class="a" style="left:573px;top:675px;width:16px;height:16px;background:#6ee096;border-radius:2px;"></div><svg style="left:593px;top:678px" width="15" height="10"><path d="M0.5 5L4 1H14V9H4Z" fill="#cfcfcf"/><circle cx="4.5" cy="5" r="1.4" fill="#303030"/></svg><div class="a" style="left:610px;top:674px;width:32px;height:18px;background:#2b2b2b;border-radius:3px;"></div><div class="a" style="left:610px;top:675px;width:15px;height:16px;background:#303030;border-radius:3px;"></div><svg style="left:613px;top:681px" width="10" height="6"><path d="M0.5 0.5L4.5 5L8.5 0.5" fill="none" stroke="#8a8a8a" stroke-width="1"/></svg><svg style="left:648px;top:674px" width="16" height="17"><rect x="0.5" y="8" width="9" height="8" fill="#a6d8ff"/><path d="M6 1.5H15M6 4.5H15M6 7.5H15M9 10.5H13" stroke="#e0e0e0" stroke-width="1"/></svg><div class="t" style="left:667px;top:676px;font-size:12px;line-height:17px;color:#e6e6e6;">Color Array</div><div class="a" style="left:930px;top:674px;width:21px;height:18px;background:#262626;border-radius:3px;"></div><div class="a" style="left:940px;top:674px;width:1px;height:18px;background:#363636;"></div><svg style="left:932px;top:678px" width="18" height="10"><path d="M7 1.5H4L1 5L4 8.5H7Z" fill="#d8c070"/><path d="M10 1.5H13L16 5L13 8.5H10Z" fill="#c84fff"/></svg><div class="a" style="left:940px;top:674px;width:11px;height:18px;background:none;border:1px solid #a455d6;border-radius:2px;"></div><svg style="left:955px;top:677px" width="12" height="12"><circle cx="6" cy="6" r="4.5" fill="none" stroke="#6e6e6e" stroke-width="1"/></svg><div class="a" style="left:496px;top:696px;width:18px;height:17px;background:#262626;border-radius:3px;"></div><div class="a" style="left:515px;top:696px;width:18px;height:17px;background:#262626;border-radius:3px;"></div><svg style="left:518px;top:699px" width="12" height="12"><circle cx="6" cy="6" r="4.8" fill="none" stroke="#cfcfcf" stroke-width="1.1"/><path d="M3.5 6L5.5 8L11 2" fill="none" stroke="#cfcfcf" stroke-width="1.4"/></svg><div class="a" style="left:573px;top:697px;width:16px;height:16px;background:#c8ec80;border-radius:2px;"></div><svg style="left:593px;top:700px" width="15" height="10"><path d="M0.5 5L4 1H14V9H4Z" fill="#cfcfcf"/><circle cx="4.5" cy="5" r="1.4" fill="#303030"/></svg><svg style="left:667px;top:697px" width="16" height="15"><path d="M1 1L4 4M4 1L1 4M11 1.5H13.5V4H11ZM6 6.5L8 8.5M8 6.5L6 8.5M2 11L4.5 13.5M4.5 11L2 13.5M10 10L13.5 13.5M13.5 10L10 13.5" stroke="#8fd08f" stroke-width="1.1" fill="none"/></svg><div class="t" style="left:686px;top:698px;font-size:12px;line-height:17px;color:#e6e6e6;">Random [Index]</div><div class="a" style="left:930px;top:696px;width:21px;height:18px;background:#262626;border-radius:3px;"></div><div class="a" style="left:940px;top:696px;width:1px;height:18px;background:#363636;"></div><svg style="left:932px;top:700px" width="18" height="10"><path d="M7 1.5H4L1 5L4 8.5H7Z" fill="#8a8a8a"/><path d="M10 1.5H13L16 5L13 8.5H10Z" fill="#c84fff"/></svg><svg style="left:955px;top:699px" width="12" height="12"><circle cx="6" cy="6" r="4.5" fill="none" stroke="#6e6e6e" stroke-width="1"/></svg><div class="a" style="left:496px;top:718px;width:18px;height:17px;background:#262626;border-radius:3px;"></div><div class="a" style="left:515px;top:718px;width:18px;height:17px;background:#262626;border-radius:3px;"></div><svg style="left:518px;top:721px" width="12" height="12"><circle cx="6" cy="6" r="4.8" fill="none" stroke="#cfcfcf" stroke-width="1.1"/><path d="M3.5 6L5.5 8L11 2" fill="none" stroke="#cfcfcf" stroke-width="1.4"/></svg><div class="a" style="left:573px;top:719px;width:16px;height:16px;background:#c8ec80;border-radius:2px;"></div><svg style="left:593px;top:722px" width="15" height="10"><path d="M0.5 5L4 1H14V9H4Z" fill="#cfcfcf"/><circle cx="4.5" cy="5" r="1.4" fill="#303030"/></svg><svg style="left:647px;top:720px" width="18" height="13"><path d="M0.5 7C2 2 3 2 4.5 7S7 12 8.5 7S11 2 12.5 7S15 12 17 6" fill="none" stroke="#8fd08f" stroke-width="1.2"/></svg><div class="t" style="left:667px;top:720px;font-size:12px;line-height:17px;color:#e6e6e6;">Oscillator [Position.Z] Cosine</div><div class="a" style="left:930px;top:718px;width:21px;height:18px;background:#262626;border-radius:3px;"></div><div class="a" style="left:940px;top:718px;width:1px;height:18px;background:#363636;"></div><svg style="left:932px;top:722px" width="18" height="10"><path d="M7 1.5H4L1 5L4 8.5H7Z" fill="#d8c070"/><path d="M10 1.5H13L16 5L13 8.5H10Z" fill="#8a8a8a"/></svg><svg style="left:955px;top:721px" width="12" height="12"><circle cx="6" cy="6" r="4.5" fill="none" stroke="#6e6e6e" stroke-width="1"/></svg><div class="a" style="left:496px;top:740px;width:18px;height:17px;background:#262626;border-radius:3px;"></div><div class="a" style="left:515px;top:740px;width:18px;height:17px;background:#262626;border-radius:3px;"></div><svg style="left:518px;top:743px" width="12" height="12"><circle cx="6" cy="6" r="4.8" fill="none" stroke="#cfcfcf" stroke-width="1.1"/><path d="M3.5 6L5.5 8L11 2" fill="none" stroke="#cfcfcf" stroke-width="1.4"/></svg><div class="a" style="left:573px;top:741px;width:16px;height:16px;background:#c8ec80;border-radius:2px;"></div><svg style="left:593px;top:744px" width="15" height="10"><path d="M0.5 5L4 1H14V9H4Z" fill="#cfcfcf"/><circle cx="4.5" cy="5" r="1.4" fill="#303030"/></svg><svg style="left:647px;top:742px" width="18" height="13"><path d="M0.5 7C2 2 3 2 4.5 7S7 12 8.5 7S11 2 12.5 7S15 12 17 6" fill="none" stroke="#8fd08f" stroke-width="1.2"/></svg><div class="t" style="left:667px;top:742px;font-size:12px;line-height:17px;color:#e6e6e6;">Oscillator [Position.X] Sine Driver</div><div class="a" style="left:930px;top:740px;width:21px;height:18px;background:#262626;border-radius:3px;"></div><div class="a" style="left:940px;top:740px;width:1px;height:18px;background:#363636;"></div><svg style="left:932px;top:744px" width="18" height="10"><path d="M7 1.5H4L1 5L4 8.5H7Z" fill="#d8c070"/><path d="M10 1.5H13L16 5L13 8.5H10Z" fill="#c84fff"/></svg><svg style="left:955px;top:743px" width="12" height="12"><circle cx="6" cy="6" r="4.5" fill="none" stroke="#6e6e6e" stroke-width="1"/></svg><div class="a" style="left:496px;top:762px;width:18px;height:17px;background:#262626;border-radius:3px;"></div><div class="a" style="left:515px;top:762px;width:18px;height:17px;background:#262626;border-radius:3px;"></div><svg style="left:518px;top:765px" width="12" height="12"><circle cx="6" cy="6" r="4.8" fill="none" stroke="#cfcfcf" stroke-width="1.1"/><path d="M3.5 6L5.5 8L11 2" fill="none" stroke="#cfcfcf" stroke-width="1.4"/></svg><div class="a" style="left:573px;top:763px;width:16px;height:16px;background:#5e8de6;border-radius:2px;"></div><svg style="left:593px;top:766px" width="15" height="10"><path d="M0.5 5L4 1H14V9H4Z" fill="#cfcfcf"/><circle cx="4.5" cy="5" r="1.4" fill="#303030"/></svg><svg style="left:648px;top:762px" width="16" height="16"><rect x="1" y="5" width="11" height="11" fill="#a6d8ff"/><path d="M4 8V14M8 8V14" stroke="#303030" stroke-width="1.6"/><path d="M12 1L13 3.5L15.5 4.5L13 5.5L12 8L11 5.5L8.5 4.5L11 3.5Z" fill="#ddd"/></svg><div class="t" style="left:667px;top:764px;font-size:12px;line-height:17px;color:#e6e6e6;">Index Context [Number]</div><div class="a" style="left:930px;top:762px;width:21px;height:18px;background:#262626;border-radius:3px;"></div><div class="a" style="left:940px;top:762px;width:1px;height:18px;background:#363636;"></div><svg style="left:932px;top:766px" width="18" height="10"><path d="M7 1.5H4L1 5L4 8.5H7Z" fill="#8a8a8a"/><path d="M10 1.5H13L16 5L13 8.5H10Z" fill="#c84fff"/></svg><svg style="left:955px;top:765px" width="12" height="12"><circle cx="6" cy="6" r="4.5" fill="none" stroke="#6e6e6e" stroke-width="1"/></svg><div class="a" style="left:496px;top:784px;width:18px;height:17px;background:#262626;border-radius:3px;"></div><div class="a" style="left:515px;top:784px;width:18px;height:17px;background:#262626;border-radius:3px;"></div><svg style="left:518px;top:787px" width="12" height="12"><circle cx="6" cy="6" r="4.8" fill="none" stroke="#cfcfcf" stroke-width="1.1"/><path d="M3.5 6L5.5 8L11 2" fill="none" stroke="#cfcfcf" stroke-width="1.4"/></svg><div class="a" style="left:573px;top:785px;width:16px;height:16px;background:#5e8de6;border-radius:2px;"></div><svg style="left:593px;top:788px" width="15" height="10"><path d="M0.5 5L4 1H14V9H4Z" fill="#cfcfcf"/><circle cx="4.5" cy="5" r="1.4" fill="#303030"/></svg><svg style="left:648px;top:786px" width="16" height="14"><text x="0" y="8" font-family="Liberation Sans" font-size="8" fill="#ccc">abc</text><path d="M0 11H15" stroke="#ccc" stroke-width="1"/></svg><div class="t" style="left:667px;top:786px;font-size:12px;line-height:17px;color:#e6e6e6;">String Generator [String]</div><div class="a" style="left:930px;top:784px;width:21px;height:18px;background:#262626;border-radius:3px;"></div><div class="a" style="left:940px;top:784px;width:1px;height:18px;background:#363636;"></div><svg style="left:932px;top:788px" width="18" height="10"><path d="M7 1.5H4L1 5L4 8.5H7Z" fill="#d8c070"/><path d="M10 1.5H13L16 5L13 8.5H10Z" fill="#c84fff"/></svg><svg style="left:955px;top:787px" width="12" height="12"><circle cx="6" cy="6" r="4.5" fill="none" stroke="#6e6e6e" stroke-width="1"/></svg><div class="a" style="left:496px;top:806px;width:18px;height:17px;background:#262626;border-radius:3px;"></div><div class="a" style="left:515px;top:806px;width:18px;height:17px;background:#262626;border-radius:3px;"></div><div class="a" style="left:534px;top:806px;width:18px;height:17px;background:#262626;border-radius:3px;"></div><svg style="left:517px;top:810px" width="15" height="10"><path d="M1 5Q7.5 -1 14 5Q7.5 11 1 5Z" fill="none" stroke="#cfcfcf" stroke-width="1.1"/><circle cx="7.5" cy="5" r="2" fill="#cfcfcf"/></svg><div class="a" style="left:573px;top:807px;width:16px;height:16px;background:#ffe27a;border-radius:2px;"></div><svg style="left:593px;top:810px" width="15" height="10"><path d="M0.5 5L4 1H14V9H4Z" fill="#cfcfcf"/><circle cx="4.5" cy="5" r="1.4" fill="#303030"/></svg><svg style="left:648px;top:808px" width="14" height="14"><rect x="1" y="1" width="2" height="2" fill="#e8d56e"/><rect x="1" y="6" width="2" height="2" fill="#e8d56e"/><rect x="1" y="11" width="2" height="2" fill="#e8d56e"/><rect x="6" y="1" width="2" height="2" fill="#e8d56e"/><rect x="6" y="6" width="2" height="2" fill="#e8d56e"/><rect x="6" y="11" width="2" height="2" fill="#e8d56e"/><rect x="11" y="1" width="2" height="2" fill="#e8d56e"/><rect x="11" y="6" width="2" height="2" fill="#e8d56e"/><rect x="11" y="11" width="2" height="2" fill="#e8d56e"/></svg><div class="t" style="left:667px;top:808px;font-size:12px;line-height:17px;color:#e6e6e6;">Duplicator</div><div class="a" style="left:930px;top:806px;width:21px;height:18px;background:#262626;border-radius:3px;"></div><div class="a" style="left:940px;top:806px;width:1px;height:18px;background:#363636;"></div><svg style="left:932px;top:810px" width="18" height="10"><path d="M7 1.5H4L1 5L4 8.5H7Z" fill="#d8c070"/><path d="M10 1.5H13L16 5L13 8.5H10Z" fill="#8a8a8a"/></svg><div class="a" style="left:930px;top:806px;width:11px;height:18px;background:none;border:1px solid #b8a55a;border-radius:2px;"></div><svg style="left:955px;top:809px" width="12" height="12"><circle cx="6" cy="6" r="4.5" fill="none" stroke="#6e6e6e" stroke-width="1"/></svg><div class="a" style="left:496px;top:827px;width:471px;height:20px;background:#4d4837;border-radius:3px;"></div><div class="a" style="left:496px;top:828px;width:18px;height:17px;background:#262626;border-radius:3px;"></div><div class="a" style="left:515px;top:828px;width:18px;height:17px;background:#262626;border-radius:3px;"></div><div class="a" style="left:534px;top:828px;width:18px;height:17px;background:#262626;border-radius:3px;"></div><div class="a" style="left:573px;top:829px;width:16px;height:16px;background:#ffe27a;border-radius:2px;"></div><svg style="left:593px;top:832px" width="15" height="10"><path d="M0.5 5L4 1H14V9H4Z" fill="#cfcfcf"/><circle cx="4.5" cy="5" r="1.4" fill="#303030"/></svg><div class="a" style="left:610px;top:828px;width:32px;height:18px;background:#2b2b2b;border-radius:3px;"></div><div class="a" style="left:610px;top:829px;width:15px;height:16px;background:#303030;border-radius:3px;"></div><svg style="left:613px;top:835px" width="10" height="6"><path d="M0.5 0.5L4.5 5L8.5 0.5" fill="none" stroke="#8a8a8a" stroke-width="1"/></svg><svg style="left:648px;top:830px" width="14" height="14"><rect x="1.5" y="1.5" width="11" height="11" fill="none" stroke="#e8d56e" stroke-width="1.2" stroke-dasharray="3 2"/></svg><div class="t" style="left:667px;top:830px;font-size:12px;line-height:17px;color:#9a9a9a;">Ellipse Shape</div><div class="a" style="left:930px;top:828px;width:21px;height:18px;background:#262626;border-radius:3px;"></div><div class="a" style="left:940px;top:828px;width:1px;height:18px;background:#363636;"></div><svg style="left:932px;top:832px" width="18" height="10"><path d="M7 1.5H4L1 5L4 8.5H7Z" fill="#d8c070"/><path d="M10 1.5H13L16 5L13 8.5H10Z" fill="#c84fff"/></svg><svg style="left:955px;top:831px" width="12" height="12"><circle cx="6" cy="6" r="4.5" fill="none" stroke="#6e6e6e" stroke-width="1"/></svg><div class="a" style="left:496px;top:850px;width:18px;height:17px;background:#262626;border-radius:3px;"></div><div class="a" style="left:515px;top:850px;width:18px;height:17px;background:#262626;border-radius:3px;"></div><div class="a" style="left:534px;top:850px;width:18px;height:17px;background:#262626;border-radius:3px;"></div><svg style="left:517px;top:854px" width="15" height="10"><path d="M1 5Q7.5 -1 14 5Q7.5 11 1 5Z" fill="none" stroke="#4a4a4a" stroke-width="1.1"/><circle cx="7.5" cy="5" r="2" fill="#4a4a4a"/></svg><div class="a" style="left:573px;top:851px;width:16px;height:16px;background:#b98cf7;border-radius:2px;"></div><svg style="left:593px;top:854px" width="15" height="10"><path d="M0.5 5L4 1H14V9H4Z" fill="#cfcfcf"/><circle cx="4.5" cy="5" r="1.4" fill="#303030"/></svg><svg style="left:666px;top:850px" width="17" height="17"><rect x="1.5" y="1.5" width="14" height="14" fill="none" stroke="#ddd" stroke-width="1" stroke-dasharray="3 2"/><path d="M4.5 4.5H12.5V6.5H9.5V13H7.5V6.5H4.5Z" fill="#e8d56e"/></svg><div class="t" style="left:686px;top:852px;font-size:12px;line-height:17px;color:#9a9a9a;">Cavalry</div><div class="a" style="left:930px;top:850px;width:21px;height:18px;background:#262626;border-radius:3px;"></div><div class="a" style="left:940px;top:850px;width:1px;height:18px;background:#363636;"></div><svg style="left:932px;top:854px" width="18" height="10"><path d="M7 1.5H4L1 5L4 8.5H7Z" fill="#d8c070"/><path d="M10 1.5H13L16 5L13 8.5H10Z" fill="#8a8a8a"/></svg><svg style="left:955px;top:853px" width="12" height="12"><circle cx="6" cy="6" r="4.5" fill="none" stroke="#6e6e6e" stroke-width="1"/></svg><div class="a" style="left:972px;top:674px;width:10px;height:287px;background:#4e4e4e;border-radius:5px;"></div><div class="a" style="left:495px;top:964px;width:475px;height:10px;background:#4e4e4e;border-radius:5px;"></div><div class="a" style="left:494px;top:976px;width:490px;height:22px;background:#444444;"></div><div class="a" style="left:497px;top:977px;width:20px;height:20px;background:#2b2b2b;border-radius:4px;border:1px solid #1f1f1f;"></div><svg style="left:500px;top:982px" width="15" height="10"><path d="M0.5 5L4 1H14V9H4Z" fill="#cfcfcf"/><circle cx="4.5" cy="5" r="1.4" fill="#2b2b2b"/></svg><div class="t" style="left:520px;top:979px;font-size:12px;line-height:17px;color:#e6e6e6;">1 selected</div><div class="a" style="left:776px;top:977px;width:19px;height:20px;background:#2b2b2b;border-radius:4px;border:1px solid #1f1f1f;"></div><svg style="left:780px;top:981px" width="12" height="12"><rect x="0.5" y="0.5" width="11" height="11" fill="none" stroke="#cfcfcf" stroke-width="1.1"/><rect x="4" y="4" width="4" height="4" fill="#cfcfcf"/></svg><div class="a" style="left:798px;top:978px;width:183px;height:19px;background:#565656;border-radius:3px;"></div><div class="a" style="left:799px;top:979px;width:86px;height:17px;background:#262626;border-radius:3px;"></div><svg style="left:806px;top:982px" width="14" height="12"><path d="M1 1.5H11M4 6H13M1 10.5H10" stroke="#3ec46d" stroke-width="2"/></svg><div class="t" style="left:821px;top:979px;font-size:12px;line-height:17px;color:#e6e6e6;">Time Editor</div><svg style="left:894px;top:981px" width="13" height="13"><path d="M1 0V12H13" fill="none" stroke="#bbb" stroke-width="1"/><path d="M2 11L12 3" stroke="#bbb" stroke-width="1" stroke-dasharray="2 1"/></svg><div class="t" style="left:910px;top:979px;font-size:12px;line-height:17px;color:#e6e6e6;">Graph Editor</div><div class="a" style="left:990px;top:608px;width:924px;height:22px;background:#2a2a2a;"></div><div class="t" style="left:1155px;top:613px;font-size:12px;line-height:17px;color:#bdbdbd;">Composition 2</div><svg style="left:1420px;top:614px" width="11" height="11"><path d="M1 1L10 10M10 1L1 10" stroke="#bdbdbd" stroke-width="1.1"/></svg><div class="a" style="left:1439px;top:610px;width:470px;height:20px;background:#474747;border-radius:4px 4px 0 0;"></div><div class="t" style="left:1625px;top:613px;font-size:12px;line-height:17px;color:#e6e6e6;">Composition 3</div><svg style="left:1890px;top:614px" width="11" height="11"><path d="M1 1L10 10M10 1L1 10" stroke="#cfcfcf" stroke-width="1.1"/></svg><div class="a" style="left:990px;top:630px;width:924px;height:1px;background:#1c1c1c;"></div><div class="a" style="left:991px;top:631px;width:914px;height:345px;background:#2a2a2a;"></div><div class="a" style="left:991px;top:631px;width:914px;height:23px;background:#262626;"></div><div class="a" style="left:988px;top:655px;width:12px;height:308px;background:#1e1e1e;"></div><div class="a" style="left:1905px;top:631px;width:9px;height:345px;background:#1e1e1e;"></div><svg style="left:990px;top:631px" width="924" height="24"><rect x="9.80" y="15" width="1" height="9" fill="#8a8a8a"/><rect x="20.68" y="19" width="1" height="4" fill="#6a6a6a"/><rect x="31.57" y="19" width="1" height="4" fill="#6a6a6a"/><rect x="42.45" y="19" width="1" height="4" fill="#6a6a6a"/><rect x="53.34" y="19" width="1" height="4" fill="#6a6a6a"/><rect x="64.22" y="15" width="1" height="9" fill="#8a8a8a"/><rect x="75.10" y="19" width="1" height="4" fill="#6a6a6a"/><rect x="85.99" y="19" width="1" height="4" fill="#6a6a6a"/><rect x="96.87" y="19" width="1" height="4" fill="#6a6a6a"/><rect x="107.76" y="19" width="1" height="4" fill="#6a6a6a"/><rect x="118.64" y="15" width="1" height="9" fill="#8a8a8a"/><rect x="129.52" y="19" width="1" height="4" fill="#6a6a6a"/><rect x="140.41" y="19" width="1" height="4" fill="#6a6a6a"/><rect x="151.29" y="19" width="1" height="4" fill="#6a6a6a"/><rect x="162.18" y="19" width="1" height="4" fill="#6a6a6a"/><rect x="173.06" y="15" width="1" height="9" fill="#8a8a8a"/><rect x="183.94" y="19" width="1" height="4" fill="#6a6a6a"/><rect x="194.83" y="19" width="1" height="4" fill="#6a6a6a"/><rect x="205.71" y="19" width="1" height="4" fill="#6a6a6a"/><rect x="216.60" y="19" width="1" height="4" fill="#6a6a6a"/><rect x="227.48" y="15" width="1" height="9" fill="#8a8a8a"/><rect x="238.36" y="19" width="1" height="4" fill="#6a6a6a"/><rect x="249.25" y="19" width="1" height="4" fill="#6a6a6a"/><rect x="260.13" y="19" width="1" height="4" fill="#6a6a6a"/><rect x="271.02" y="19" width="1" height="4" fill="#6a6a6a"/><rect x="281.90" y="15" width="1" height="9" fill="#8a8a8a"/><rect x="292.78" y="19" width="1" height="4" fill="#6a6a6a"/><rect x="303.67" y="19" width="1" height="4" fill="#6a6a6a"/><rect x="314.55" y="19" width="1" height="4" fill="#6a6a6a"/><rect x="325.44" y="19" width="1" height="4" fill="#6a6a6a"/><rect x="336.32" y="15" width="1" height="9" fill="#8a8a8a"/><rect x="347.20" y="19" width="1" height="4" fill="#6a6a6a"/><rect x="358.09" y="19" width="1" height="4" fill="#6a6a6a"/><rect x="368.97" y="19" width="1" height="4" fill="#6a6a6a"/><rect x="379.86" y="19" width="1" height="4" fill="#6a6a6a"/><rect x="390.74" y="15" width="1" height="9" fill="#8a8a8a"/><rect x="401.62" y="19" width="1" height="4" fill="#6a6a6a"/><rect x="412.51" y="19" width="1" height="4" fill="#6a6a6a"/><rect x="423.39" y="19" width="1" height="4" fill="#6a6a6a"/><rect x="434.28" y="19" width="1" height="4" fill="#6a6a6a"/><rect x="445.16" y="15" width="1" height="9" fill="#8a8a8a"/><rect x="456.04" y="19" width="1" height="4" fill="#6a6a6a"/><rect x="466.93" y="19" width="1" height="4" fill="#6a6a6a"/><rect x="477.81" y="19" width="1" height="4" fill="#6a6a6a"/><rect x="488.70" y="19" width="1" height="4" fill="#6a6a6a"/><rect x="499.58" y="15" width="1" height="9" fill="#8a8a8a"/><rect x="510.46" y="19" width="1" height="4" fill="#6a6a6a"/><rect x="521.35" y="19" width="1" height="4" fill="#6a6a6a"/><rect x="532.23" y="19" width="1" height="4" fill="#6a6a6a"/><rect x="543.12" y="19" width="1" height="4" fill="#6a6a6a"/><rect x="554.00" y="15" width="1" height="9" fill="#8a8a8a"/><rect x="564.88" y="19" width="1" height="4" fill="#6a6a6a"/><rect x="575.77" y="19" width="1" height="4" fill="#6a6a6a"/><rect x="586.65" y="19" width="1" height="4" fill="#6a6a6a"/><rect x="597.54" y="19" width="1" height="4" fill="#6a6a6a"/><rect x="608.42" y="15" width="1" height="9" fill="#8a8a8a"/><rect x="619.30" y="19" width="1" height="4" fill="#6a6a6a"/><rect x="630.19" y="19" width="1" height="4" fill="#6a6a6a"/><rect x="641.07" y="19" width="1" height="4" fill="#6a6a6a"/><rect x="651.96" y="19" width="1" height="4" fill="#6a6a6a"/><rect x="662.84" y="15" width="1" height="9" fill="#8a8a8a"/><rect x="673.72" y="19" width="1" height="4" fill="#6a6a6a"/><rect x="684.61" y="19" width="1" height="4" fill="#6a6a6a"/><rect x="695.49" y="19" width="1" height="4" fill="#6a6a6a"/><rect x="706.38" y="19" width="1" height="4" fill="#6a6a6a"/><rect x="717.26" y="15" width="1" height="9" fill="#8a8a8a"/><rect x="728.14" y="19" width="1" height="4" fill="#6a6a6a"/><rect x="739.03" y="19" width="1" height="4" fill="#6a6a6a"/><rect x="749.91" y="19" width="1" height="4" fill="#6a6a6a"/><rect x="760.80" y="19" width="1" height="4" fill="#6a6a6a"/><rect x="771.68" y="15" width="1" height="9" fill="#8a8a8a"/><rect x="782.56" y="19" width="1" height="4" fill="#6a6a6a"/><rect x="793.45" y="19" width="1" height="4" fill="#6a6a6a"/><rect x="804.33" y="19" width="1" height="4" fill="#6a6a6a"/><rect x="815.22" y="19" width="1" height="4" fill="#6a6a6a"/><rect x="826.10" y="15" width="1" height="9" fill="#8a8a8a"/><rect x="836.98" y="19" width="1" height="4" fill="#6a6a6a"/><rect x="847.87" y="19" width="1" height="4" fill="#6a6a6a"/><rect x="858.75" y="19" width="1" height="4" fill="#6a6a6a"/><rect x="869.64" y="19" width="1" height="4" fill="#6a6a6a"/><rect x="880.52" y="15" width="1" height="9" fill="#8a8a8a"/><rect x="891.40" y="19" width="1" height="4" fill="#6a6a6a"/><rect x="902.29" y="19" width="1" height="4" fill="#6a6a6a"/></svg><div class="t" style="left:968.3px;top:631px;width:60px;text-align:center;font-size:12px;line-height:17px;color:#e0e0e0">0</div><div class="t" style="left:1022.7px;top:631px;width:60px;text-align:center;font-size:12px;line-height:17px;color:#e0e0e0">15</div><div class="t" style="left:1077.1px;top:631px;width:60px;text-align:center;font-size:12px;line-height:17px;color:#e0e0e0">30</div><div class="t" style="left:1131.6px;top:631px;width:60px;text-align:center;font-size:12px;line-height:17px;color:#e0e0e0">45</div><div class="t" style="left:1186.0px;top:631px;width:60px;text-align:center;font-size:12px;line-height:17px;color:#e0e0e0">60</div><div class="t" style="left:1240.4px;top:631px;width:60px;text-align:center;font-size:12px;line-height:17px;color:#e0e0e0">75</div><div class="t" style="left:1294.8px;top:631px;width:60px;text-align:center;font-size:12px;line-height:17px;color:#e0e0e0">90</div><div class="t" style="left:1349.2px;top:631px;width:60px;text-align:center;font-size:12px;line-height:17px;color:#e0e0e0">105</div><div class="t" style="left:1403.7px;top:631px;width:60px;text-align:center;font-size:12px;line-height:17px;color:#e0e0e0">120</div><div class="t" style="left:1458.1px;top:631px;width:60px;text-align:center;font-size:12px;line-height:17px;color:#e0e0e0">135</div><div class="t" style="left:1512.5px;top:631px;width:60px;text-align:center;font-size:12px;line-height:17px;color:#e0e0e0">150</div><div class="t" style="left:1566.9px;top:631px;width:60px;text-align:center;font-size:12px;line-height:17px;color:#e0e0e0">165</div><div class="t" style="left:1621.3px;top:631px;width:60px;text-align:center;font-size:12px;line-height:17px;color:#e0e0e0">180</div><div class="t" style="left:1675.8px;top:631px;width:60px;text-align:center;font-size:12px;line-height:17px;color:#e0e0e0">195</div><div class="t" style="left:1730.2px;top:631px;width:60px;text-align:center;font-size:12px;line-height:17px;color:#e0e0e0">210</div><div class="t" style="left:1784.6px;top:631px;width:60px;text-align:center;font-size:12px;line-height:17px;color:#e0e0e0">225</div><div class="t" style="left:1839.0px;top:631px;width:60px;text-align:center;font-size:12px;line-height:17px;color:#e0e0e0">240</div><div class="a" style="left:1000px;top:654px;width:905px;height:17px;background:#464646;"></div><div class="a" style="left:996px;top:653px;width:4px;height:18px;background:#5ec9a6;border-radius:1px;"></div><div class="a" style="left:1905px;top:653px;width:5px;height:18px;background:#5ec9a6;border-radius:1px;"></div><svg style="left:990px;top:631px" width="924" height="345"><defs><pattern id="pg" patternUnits="userSpaceOnUse" width="25.11" height="60" patternTransform="translate(864.65 43) rotate(45)"><rect x="0" y="-10" width="12.555" height="80" fill="#74e09a"/><rect x="12.555" y="-10" width="12.555" height="80" fill="#66c98a"/><rect x="0" y="-10" width="1.4" height="80" fill="#8cffb8"/><rect x="1.4" y="-10" width="1.8" height="80" fill="#8cffb8" opacity="0.4"/><rect x="12.555" y="-10" width="1.4" height="80" fill="#8cffb8"/><rect x="13.955" y="-10" width="1.8" height="80" fill="#8cffb8" opacity="0.4"/></pattern><pattern id="py1" patternUnits="userSpaceOnUse" width="25.11" height="60" patternTransform="translate(864.65 65) rotate(45)"><rect x="0" y="-10" width="12.555" height="80" fill="#cbee80"/><rect x="12.555" y="-10" width="12.555" height="80" fill="#b9d76e"/><rect x="0" y="-10" width="1.4" height="80" fill="#ecff9c"/><rect x="1.4" y="-10" width="1.8" height="80" fill="#ecff9c" opacity="0.4"/><rect x="12.555" y="-10" width="1.4" height="80" fill="#ecff9c"/><rect x="13.955" y="-10" width="1.8" height="80" fill="#ecff9c" opacity="0.4"/></pattern><pattern id="py2" patternUnits="userSpaceOnUse" width="25.11" height="60" patternTransform="translate(864.65 87) rotate(45)"><rect x="0" y="-10" width="12.555" height="80" fill="#cbee80"/><rect x="12.555" y="-10" width="12.555" height="80" fill="#b9d76e"/><rect x="0" y="-10" width="1.4" height="80" fill="#ecff9c"/><rect x="1.4" y="-10" width="1.8" height="80" fill="#ecff9c" opacity="0.4"/><rect x="12.555" y="-10" width="1.4" height="80" fill="#ecff9c"/><rect x="13.955" y="-10" width="1.8" height="80" fill="#ecff9c" opacity="0.4"/></pattern><pattern id="py3" patternUnits="userSpaceOnUse" width="25.11" height="60" patternTransform="translate(864.65 109) rotate(45)"><rect x="0" y="-10" width="12.555" height="80" fill="#cbee80"/><rect x="12.555" y="-10" width="12.555" height="80" fill="#b9d76e"/><rect x="0" y="-10" width="1.4" height="80" fill="#ecff9c"/><rect x="1.4" y="-10" width="1.8" height="80" fill="#ecff9c" opacity="0.4"/><rect x="12.555" y="-10" width="1.4" height="80" fill="#ecff9c"/><rect x="13.955" y="-10" width="1.8" height="80" fill="#ecff9c" opacity="0.4"/></pattern><pattern id="pb1" patternUnits="userSpaceOnUse" width="25.11" height="60" patternTransform="translate(864.65 131) rotate(45)"><rect x="0" y="-10" width="12.555" height="80" fill="#6a94e8"/><rect x="12.555" y="-10" width="12.555" height="80" fill="#5a82d4"/><rect x="0" y="-10" width="1.4" height="80" fill="#7fabff"/><rect x="1.4" y="-10" width="1.8" height="80" fill="#7fabff" opacity="0.4"/><rect x="12.555" y="-10" width="1.4" height="80" fill="#7fabff"/><rect x="13.955" y="-10" width="1.8" height="80" fill="#7fabff" opacity="0.4"/></pattern><pattern id="pb2" patternUnits="userSpaceOnUse" width="25.11" height="60" patternTransform="translate(864.65 153) rotate(45)"><rect x="0" y="-10" width="12.555" height="80" fill="#6a94e8"/><rect x="12.555" y="-10" width="12.555" height="80" fill="#5a82d4"/><rect x="0" y="-10" width="1.4" height="80" fill="#7fabff"/><rect x="1.4" y="-10" width="1.8" height="80" fill="#7fabff" opacity="0.4"/><rect x="12.555" y="-10" width="1.4" height="80" fill="#7fabff"/><rect x="13.955" y="-10" width="1.8" height="80" fill="#7fabff" opacity="0.4"/></pattern><pattern id="pd" patternUnits="userSpaceOnUse" width="3" height="3"><rect width="3" height="3" fill="#f7e584"/><rect x="1" y="1" width="1" height="1" fill="#c9b656"/></pattern></defs><rect x="10" y="43" width="905" height="18" rx="1" fill="url(#pg)"/><rect x="10" y="65" width="905" height="18" rx="1" fill="url(#py1)"/><rect x="10" y="87" width="905" height="18" rx="1" fill="url(#py2)"/><rect x="10" y="109" width="905" height="18" rx="1" fill="url(#py3)"/><rect x="10" y="131" width="905" height="18" rx="1" fill="url(#pb1)"/><rect x="10" y="153" width="905" height="18" rx="1" fill="url(#pb2)"/><rect x="10" y="175" width="905" height="18" rx="3" fill="#ffe57f"/><rect x="10.75" y="197.75" width="903.5" height="16.5" rx="3" fill="url(#pd)" stroke="#ffffff" stroke-width="1.5"/><rect x="10" y="219" width="905" height="18" rx="3" fill="#b48cf5"/></svg><div class="t" style="left:1008px;top:675px;font-size:12px;line-height:17px;color:#1e1e1e;">Color Array</div><div class="t" style="left:1008px;top:697px;font-size:12px;line-height:17px;color:#2a2a2a;">Random [Index]</div><div class="t" style="left:1008px;top:719px;font-size:12px;line-height:17px;color:#2a2a2a;">Oscillator [Position.Z] Cosine</div><div class="t" style="left:1008px;top:741px;font-size:12px;line-height:17px;color:#2a2a2a;">Oscillator [Position.X] Sine Driver</div><div class="t" style="left:1008px;top:763px;font-size:12px;line-height:17px;color:#ffffff;-webkit-text-stroke:0.35px #fff;">Index Context [Number]</div><div class="t" style="left:1008px;top:785px;font-size:12px;line-height:17px;color:#ffffff;-webkit-text-stroke:0.35px #fff;">String Generator [String]</div><div class="t" style="left:1008px;top:807px;font-size:12px;line-height:17px;color:#1e1e1e;">Duplicator</div><div class="t" style="left:1008px;top:829px;font-size:12px;line-height:17px;color:#1e1e1e;">Ellipse Shape</div><div class="t" style="left:1008px;top:851px;font-size:12px;line-height:17px;color:#ffffff;-webkit-text-stroke:0.35px #fff;">Cavalry</div><div class="a" style="left:1390px;top:650px;width:1px;height:313px;background:#5ec9a6;"></div><svg style="left:1385px;top:643px" width="11" height="10"><path d="M0 0H11L5.5 9Z" fill="#5ec9a6"/></svg><div class="a" style="left:992px;top:964px;width:913px;height:10px;background:#4e4e4e;border-radius:5px;"></div><div class="a" style="left:990px;top:976px;width:924px;height:22px;background:#444444;"></div><div class="a" style="left:994px;top:977px;width:20px;height:20px;background:#2b2b2b;border-radius:4px;border:1px solid #1f1f1f;"></div><svg style="left:997px;top:981px" width="15" height="13"><path d="M0 1H14M3 5H14M5 9H14" stroke="#cfcfcf" stroke-width="1.4"/><path d="M0 12H2M4 12H6" stroke="#cfcfcf"/></svg><div class="a" style="left:1014px;top:978px;width:150px;height:19px;background:#2b2b2b;border-radius:3px;"></div><div class="t" style="left:1017px;top:979px;font-size:12px;line-height:17px;color:#e6e6e6;">Default Keyframe Layer</div><div class="a" style="left:1171px;top:978px;width:70px;height:19px;background:#2b2b2b;border-radius:3px;"></div><div class="t" style="left:1176px;top:979px;font-size:12px;line-height:17px;color:#555;">F</div><div class="t" style="left:1189px;top:979px;font-size:12px;line-height:17px;color:#cfcfcf;">-</div><div class="t" style="left:1246px;top:979px;font-size:12px;line-height:17px;color:#e6e6e6;">Align:</div><div class="a" style="left:1284px;top:977px;width:54px;height:20px;background:#2b2b2b;border-radius:3px;border:1px solid #1f1f1f;"></div><svg style="left:1287px;top:980px" width="48" height="14"><path d="M1.5 1V13M4 4H10M4 10H9" stroke="#ddd" stroke-width="1.2" stroke-dasharray="2 1"/><path d="M24 1V13M19 4H29M20 10H28" stroke="#ddd" stroke-width="1.2" stroke-dasharray="2 1"/><path d="M46.5 1V13M38 4H44M39 10H44" stroke="#ddd" stroke-width="1.2" stroke-dasharray="2 1"/></svg><div class="a" style="left:1340px;top:977px;width:19px;height:20px;background:#2b2b2b;border-radius:3px;border:1px solid #1f1f1f;"></div><svg style="left:1343px;top:980px" width="14" height="14"><rect x="1.5" y="1.5" width="11" height="11" fill="none" stroke="#ddd" stroke-dasharray="2 2"/><rect x="5" y="5" width="4" height="4" fill="#ddd"/></svg><div class="a" style="left:1362px;top:977px;width:32px;height:20px;background:#2b2b2b;border-radius:3px;border:1px solid #1f1f1f;"></div><svg style="left:1364px;top:980px" width="14" height="14"><path d="M2 10A5 5 0 0 1 11 5L9 8" fill="none" stroke="#ddd" stroke-width="2"/></svg><svg style="left:1383px;top:983px" width="8" height="8"><path d="M1 0.5L6.5 4L1 7.5Z" fill="none" stroke="#9a9a9a" stroke-width="1"/></svg><div class="a" style="left:1397px;top:977px;width:32px;height:20px;background:#2b2b2b;border-radius:3px;border:1px solid #1f1f1f;"></div><svg style="left:1400px;top:980px" width="16" height="14"><path d="M8 1V13M1 7H4M12 7H15M5 4V10M11 4V10" stroke="#ddd" stroke-width="1.1"/></svg><svg style="left:1418px;top:983px" width="8" height="8"><path d="M1 0.5L6.5 4L1 7.5Z" fill="none" stroke="#9a9a9a" stroke-width="1"/></svg><svg style="left:1741px;top:979px" width="16" height="16"><circle cx="7" cy="7" r="5.5" fill="none" stroke="#cfcfcf" stroke-width="1.1"/><path d="M4 7H10" stroke="#cfcfcf" stroke-width="1.1"/><path d="M11 11L14 14" stroke="#cfcfcf" stroke-width="1.8"/></svg><div class="a" style="left:1766px;top:985px;width:116px;height:4px;background:#525252;border-radius:2px;"></div><svg style="left:1761px;top:981px" width="12" height="12"><circle cx="6" cy="6" r="5" fill="#4fbf97" stroke="#86d9bb" stroke-width="1"/><circle cx="6" cy="6" r="1.5" fill="#3a9c79"/></svg><svg style="left:1886px;top:979px" width="16" height="16"><circle cx="7" cy="7" r="5.5" fill="none" stroke="#cfcfcf" stroke-width="1.1"/><path d="M4 7H10M7 4V10" stroke="#cfcfcf" stroke-width="1.1"/><path d="M11 11L14 14" stroke="#cfcfcf" stroke-width="1.8"/></svg><div class="a" style="left:494px;top:998px;width:1420px;height:6px;background:#141414;"></div><div class="a" style="left:494px;top:1004px;width:1420px;height:22px;background:#3a3a3a;"></div><div class="a" style="left:498px;top:1010px;width:2px;height:2px;background:#8a8a8a;"></div><div class="a" style="left:498px;top:1014px;width:2px;height:2px;background:#8a8a8a;"></div><div class="a" style="left:498px;top:1018px;width:2px;height:2px;background:#8a8a8a;"></div><div class="a" style="left:508px;top:1006px;width:17px;height:18px;background:#2b2b2b;border-radius:3px;border:1px solid #1f1f1f;"></div><svg style="left:510px;top:1008px" width="13" height="13"><path d="M0.5 0.5H12.5V9H8L10 12L5 9H0.5Z" fill="#ddd"/><path d="M2.5 3H10.5M2.5 5H10.5M2.5 7H8" stroke="#444" stroke-width="1"/></svg><div class="a" style="left:528px;top:1008px;width:18px;height:14px;background:#d4be72;border-radius:2px;"></div><div class="t" style="left:533px;top:1007px;font-size:12px;line-height:17px;color:#3a2a10;">0</div><svg style="left:553px;top:1011px" width="8" height="8"><circle cx="4" cy="4" r="3.3" fill="#d4be72"/></svg><div class="t" style="left:565px;top:1007px;font-size:12px;line-height:17px;color:#e6e6e6;letter-spacing:-0.28px;">You are working in an unsaved scene.</div><div class="a" style="left:1610px;top:1006px;width:80px;height:18px;background:#d4be72;border-radius:3px;"></div><div class="t" style="left:1615px;top:1008px;font-size:12px;line-height:17px;color:#2a2a2a;letter-spacing:-0.35px;">Feedback</div><svg style="left:1671px;top:1008px" width="14" height="14"><path d="M1 0.5H8L11 3.5V13H1Z" fill="#f4f4f4" stroke="#9fd89f" stroke-width="0.8"/><path d="M3 5H8M3 7.5H7" stroke="#ccc" stroke-width="1"/><path d="M5 11L12 4" stroke="#f08050" stroke-width="2.2"/></svg><div class="a" style="left:1693px;top:1006px;width:107px;height:18px;background:#37c871;border-radius:3px;"></div><div class="t" style="left:1698px;top:1008px;font-size:12px;line-height:17px;color:#10301c;letter-spacing:-0.18px;">Upgrade to Pro</div><svg style="left:1782px;top:1009px" width="15" height="13"><path d="M1 4Q3 2 5 4L7 12H2Z" fill="#f2c230"/><path d="M14 4Q12 2 10 4L8 12H13Z" fill="#f2c230"/><path d="M4 1L5 2M7.5 0V1.5M11 1L10 2" stroke="#f2c230" stroke-width="0.8"/></svg><div class="a" style="left:1805px;top:1006px;width:106px;height:18px;background:#3aaef0;border-radius:3px;"></div><div class="t" style="left:1810px;top:1008px;font-size:12px;line-height:17px;color:#0a1a40;letter-spacing:-0.3px;">Tips and Tricks</div><svg style="left:1891px;top:1008px" width="14" height="14"><path d="M13 1Q8 1 4 7L7 10Q13 6 13 1Z" fill="#f4f4f4" stroke="#e33" stroke-width="1.2"/><circle cx="9" cy="5" r="1.3" fill="#6ab0e0"/><path d="M4 10L1.5 12.5" stroke="#f80" stroke-width="2.2"/></svg><div class="a" style="left:488px;top:580px;width:1426px;height:6px;background:#141414;"></div><div class="a" style="left:1593px;top:484px;width:321px;height:6px;background:#141414;"></div><div class="a" style="left:488px;top:79px;width:6px;height:950px;background:#141414;"></div><div class="a" style="left:524px;top:85px;width:6px;height:495px;background:#141414;"></div><div class="a" style="left:1587px;top:85px;width:6px;height:495px;background:#141414;"></div><div class="a" style="left:986px;top:807px;width:2px;height:2px;background:#8a8a8a;"></div><div class="a" style="left:986px;top:810px;width:2px;height:2px;background:#8a8a8a;"></div><div class="a" style="left:986px;top:813px;width:2px;height:2px;background:#8a8a8a;"></div><div class="a" style="left:986px;top:816px;width:2px;height:2px;background:#8a8a8a;"></div><div class="a" style="left:986px;top:819px;width:2px;height:2px;background:#8a8a8a;"></div><div class="a" style="left:986px;top:822px;width:2px;height:2px;background:#8a8a8a;"></div></body></html>
